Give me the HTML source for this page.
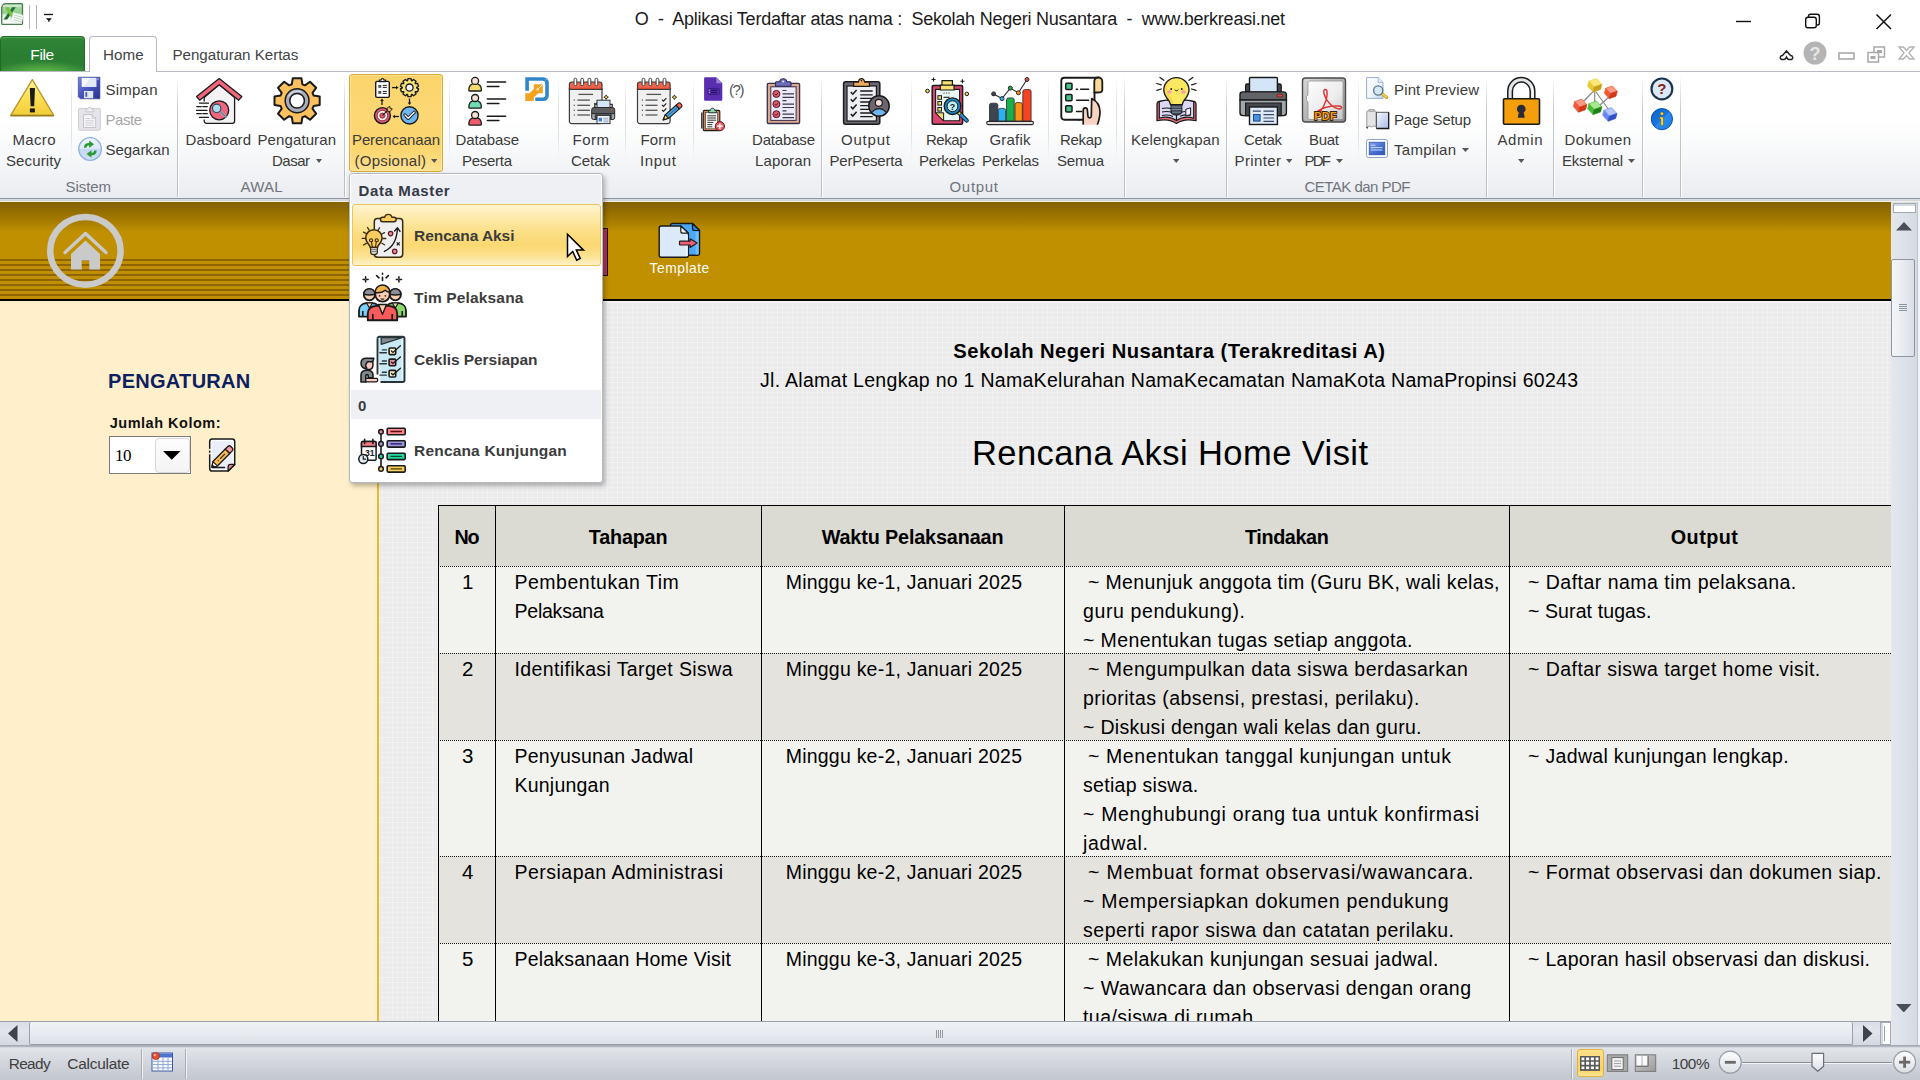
<!DOCTYPE html>
<html><head><meta charset="utf-8"><title>Excel</title>
<style>
html,body{margin:0;padding:0;}
body{width:1920px;height:1080px;overflow:hidden;position:relative;background:#fff;font-family:'Liberation Sans', sans-serif;}
#root{position:absolute;left:0;top:0;width:1920px;height:1080px;overflow:hidden;}
#root div,#root svg,#root span.t{position:absolute;}
span.t{white-space:pre;line-height:1;}
</style></head><body><div id="root">
<div style="left:0px;top:0px;width:1920px;height:71px;background:#fff"></div>
<span class="t" style="left:634.70px;top:9px;font-size:18px;font-weight:400;color:#1a1a1a;font-family:'Liberation Sans', sans-serif;letter-spacing:-0.237px;line-height:20px;">O  -  Aplikasi Terdaftar atas nama :  Sekolah Negeri Nusantara  -  www.berkreasi.net</span>
<svg style="left:1730px;top:8px;" width="170" height="28" viewBox="0 0 170 28">
<path d="M6 13.5h15" stroke="#111" stroke-width="1.4" fill="none"/>
<rect x="75.7" y="9.2" width="10.6" height="10.6" rx="2.2" fill="#fff" stroke="#111" stroke-width="1.4"/>
<path d="M78.5 9V8.2a2 2 0 0 1 2-2H87a2.4 2.4 0 0 1 2.4 2.4V15a2 2 0 0 1-2 2h-1" fill="none" stroke="#111" stroke-width="1.4"/>
<path d="M146.5 6.5l14.5 14.5M161 6.5l-14.5 14.5" stroke="#111" stroke-width="1.5" fill="none"/>
</svg>
<svg style="left:1776px;top:37.5px;" width="144" height="30" viewBox="0 0 144 30">
<path d="M5.5 21.5c-2-1-1.5-4 1-4l4-4.5 4 4.5c2.500 0 3 3 1 4h-2.500c-1.500 0-2-1.500-2.500-2.500-.5 1-1 2.500-2.500 2.500z" fill="#fff" stroke="#222" stroke-width="1.5"/>
<circle cx="39" cy="15" r="11.5" fill="#b4b4b4"/>
<text x="39" y="21.5" font-family="Liberation Sans, sans-serif" font-weight="700" font-size="18" text-anchor="middle" fill="#e6e6e6">?</text>
<rect x="63" y="15" width="15" height="6" fill="#fff" stroke="#a8a8a8" stroke-width="1.6"/>
<rect x="98" y="9" width="10.5" height="10" fill="#fff" stroke="#a8a8a8" stroke-width="1.5"/><rect x="101" y="12" width="5" height="3" fill="#a8a8a8"/>
<rect x="92" y="14.5" width="10.5" height="9.500" fill="#fff" stroke="#a8a8a8" stroke-width="1.5"/><rect x="94.5" y="18" width="5" height="3" fill="#a8a8a8"/>
<path d="M123 9h4.500l3 3.500 3-3.500h4.500l-5 6 5 6h-4.500l-3-3.500-3 3.500H123l5-6z" fill="#fff" stroke="#b4b4b4" stroke-width="1.4"/>
</svg>
<svg style="left:0px;top:0px;" width="60" height="36" viewBox="0 0 60 36">
<defs><linearGradient id="xg" x1="0" y1="0" x2="0" y2="1"><stop offset="0" stop-color="#b6dcb0"/><stop offset=".45" stop-color="#8fcf8c"/><stop offset=".55" stop-color="#e4f3e0"/><stop offset="1" stop-color="#ffffff"/></linearGradient></defs>
<path d="M1.700 8a4.400 4.400 0 0 1 4.400-4.400h15.400a1 1 0 0 1 1 1v18.800a1 1 0 0 1-1 1H2.700a1 1 0 0 1-1-1z" fill="url(#xg)" stroke="#4a7a52" stroke-width="1.300"/>
<path d="M3.200 5.200h18v1.200h-18z" fill="#eef8ec" opacity=".8"/>
<path d="M12.200 7.200h3.600L7.200 19.400H3.500z" fill="#1f6f3a"/>
<path d="M4.800 7.200h4l7.600 12.200h-4.200z" fill="#7cc048"/>
<path d="M13.400 12.600l10.400 2.800-2.600 8-10.600-2.600z" fill="#fbfdfb" stroke="#c8dcc8" stroke-width=".5"/>
<path d="M14.600 15.200l7.600 2M14 17.400l7.600 2M13.400 19.600l7.600 2" stroke="#a8cca8" stroke-width=".8"/>
<path d="M29.500 5v24M36.500 5v24" stroke="#b4b4b4" stroke-width="1"/>
<path d="M44 14.500h9" stroke="#111" stroke-width="1.300"/>
<path d="M45.800 18.200h6.200l-2.600 2.600v1.200h-1v-1.200z" fill="#111"/>
</svg>
<div style="left:0px;top:71px;width:1920px;height:1px;background:#b7bcc4"></div>
<div style="left:0px;top:36px;width:85px;height:35px;background:radial-gradient(ellipse 60% 38% at 50% 108%,rgba(110,200,80,.95),rgba(110,200,80,0) 100%),linear-gradient(180deg,#3a8f40 0%,#2f8436 8%,#2a7d31 55%,#2c8033 100%);border:1px solid #1f6a25;border-bottom:none;border-radius:4px 4px 0 0;box-sizing:border-box;box-shadow:inset 0 1px 0 #4fa554"></div>
<span class="t" style="left:30.30px;top:46px;font-size:15.5px;font-weight:400;color:#fff;font-family:'Liberation Sans', sans-serif;letter-spacing:-0.361px;line-height:17px;">File</span>
<div style="left:89px;top:36px;width:68px;height:37px;background:#fff;border:1px solid #b7bcc4;border-bottom:none;border-radius:4px 4px 0 0;box-sizing:border-box"></div>
<span class="t" style="left:103.00px;top:46px;font-size:15.2px;font-weight:400;color:#444;font-family:'Liberation Sans', sans-serif;letter-spacing:0.061px;line-height:17px;">Home</span>
<span class="t" style="left:172.50px;top:46px;font-size:15.2px;font-weight:400;color:#444;font-family:'Liberation Sans', sans-serif;letter-spacing:-0.054px;line-height:17px;">Pengaturan Kertas</span>
<div style="left:0px;top:72px;width:1920px;height:126px;background:linear-gradient(180deg,#ffffff 0%,#ffffff 38%,#f8f9fa 62%,#f1f2f5 82%,#eaecf0 100%)"></div>
<div style="left:0px;top:198px;width:1920px;height:1px;background:#8f939b"></div>
<div style="left:0px;top:199px;width:1920px;height:2px;background:linear-gradient(180deg,#d9dde4,#d0d4dc)"></div>
<div style="left:0px;top:201px;width:1920px;height:1px;background:#f3efe2"></div>
<div style="left:177.0px;top:75px;width:1px;height:122px;background:linear-gradient(180deg,rgba(190,195,203,0) 0%,#c5c9d0 30%,#b9bec7 100%)"></div>
<div style="left:178.0px;top:75px;width:1px;height:122px;background:linear-gradient(180deg,rgba(255,255,255,0) 0%,#fff 30%,#fff 100%)"></div>
<div style="left:343.5px;top:75px;width:1px;height:122px;background:linear-gradient(180deg,rgba(190,195,203,0) 0%,#c5c9d0 30%,#b9bec7 100%)"></div>
<div style="left:344.5px;top:75px;width:1px;height:122px;background:linear-gradient(180deg,rgba(255,255,255,0) 0%,#fff 30%,#fff 100%)"></div>
<div style="left:820.5px;top:75px;width:1px;height:122px;background:linear-gradient(180deg,rgba(190,195,203,0) 0%,#c5c9d0 30%,#b9bec7 100%)"></div>
<div style="left:821.5px;top:75px;width:1px;height:122px;background:linear-gradient(180deg,rgba(255,255,255,0) 0%,#fff 30%,#fff 100%)"></div>
<div style="left:1123.5px;top:75px;width:1px;height:122px;background:linear-gradient(180deg,rgba(190,195,203,0) 0%,#c5c9d0 30%,#b9bec7 100%)"></div>
<div style="left:1124.5px;top:75px;width:1px;height:122px;background:linear-gradient(180deg,rgba(255,255,255,0) 0%,#fff 30%,#fff 100%)"></div>
<div style="left:1225.5px;top:75px;width:1px;height:122px;background:linear-gradient(180deg,rgba(190,195,203,0) 0%,#c5c9d0 30%,#b9bec7 100%)"></div>
<div style="left:1226.5px;top:75px;width:1px;height:122px;background:linear-gradient(180deg,rgba(255,255,255,0) 0%,#fff 30%,#fff 100%)"></div>
<div style="left:1485.5px;top:75px;width:1px;height:122px;background:linear-gradient(180deg,rgba(190,195,203,0) 0%,#c5c9d0 30%,#b9bec7 100%)"></div>
<div style="left:1486.5px;top:75px;width:1px;height:122px;background:linear-gradient(180deg,rgba(255,255,255,0) 0%,#fff 30%,#fff 100%)"></div>
<div style="left:1552.5px;top:75px;width:1px;height:122px;background:linear-gradient(180deg,rgba(190,195,203,0) 0%,#c5c9d0 30%,#b9bec7 100%)"></div>
<div style="left:1553.5px;top:75px;width:1px;height:122px;background:linear-gradient(180deg,rgba(255,255,255,0) 0%,#fff 30%,#fff 100%)"></div>
<div style="left:1641.5px;top:75px;width:1px;height:122px;background:linear-gradient(180deg,rgba(190,195,203,0) 0%,#c5c9d0 30%,#b9bec7 100%)"></div>
<div style="left:1642.5px;top:75px;width:1px;height:122px;background:linear-gradient(180deg,rgba(255,255,255,0) 0%,#fff 30%,#fff 100%)"></div>
<div style="left:1680.0px;top:75px;width:1px;height:122px;background:linear-gradient(180deg,rgba(190,195,203,0) 0%,#c5c9d0 30%,#b9bec7 100%)"></div>
<div style="left:1681.0px;top:75px;width:1px;height:122px;background:linear-gradient(180deg,rgba(255,255,255,0) 0%,#fff 30%,#fff 100%)"></div>
<div style="left:71px;top:78px;width:1px;height:82px;background:linear-gradient(180deg,rgba(220,223,228,0),#dfe2e7 30%,#dfe2e7 70%,rgba(220,223,228,0))"></div>
<div style="left:449px;top:78px;width:1px;height:82px;background:linear-gradient(180deg,rgba(220,223,228,0),#dfe2e7 30%,#dfe2e7 70%,rgba(220,223,228,0))"></div>
<div style="left:557.5px;top:78px;width:1px;height:82px;background:linear-gradient(180deg,rgba(220,223,228,0),#dfe2e7 30%,#dfe2e7 70%,rgba(220,223,228,0))"></div>
<div style="left:625px;top:78px;width:1px;height:82px;background:linear-gradient(180deg,rgba(220,223,228,0),#dfe2e7 30%,#dfe2e7 70%,rgba(220,223,228,0))"></div>
<div style="left:693px;top:78px;width:1px;height:82px;background:linear-gradient(180deg,rgba(220,223,228,0),#dfe2e7 30%,#dfe2e7 70%,rgba(220,223,228,0))"></div>
<div style="left:911px;top:78px;width:1px;height:82px;background:linear-gradient(180deg,rgba(220,223,228,0),#dfe2e7 30%,#dfe2e7 70%,rgba(220,223,228,0))"></div>
<div style="left:1047.5px;top:78px;width:1px;height:82px;background:linear-gradient(180deg,rgba(220,223,228,0),#dfe2e7 30%,#dfe2e7 70%,rgba(220,223,228,0))"></div>
<div style="left:1115.5px;top:78px;width:1px;height:82px;background:linear-gradient(180deg,rgba(220,223,228,0),#dfe2e7 30%,#dfe2e7 70%,rgba(220,223,228,0))"></div>
<div style="left:1357.5px;top:78px;width:1px;height:82px;background:linear-gradient(180deg,rgba(220,223,228,0),#dfe2e7 30%,#dfe2e7 70%,rgba(220,223,228,0))"></div>
<span class="t" style="left:12.50px;top:131px;font-size:15px;font-weight:400;color:#3b3b3b;font-family:'Liberation Sans', sans-serif;letter-spacing:0.328px;line-height:17px;">Macro</span>
<span class="t" style="left:6.00px;top:152px;font-size:15px;font-weight:400;color:#3b3b3b;font-family:'Liberation Sans', sans-serif;letter-spacing:0.116px;line-height:17px;">Security</span>
<span class="t" style="left:105.50px;top:81px;font-size:15px;font-weight:400;color:#3b3b3b;font-family:'Liberation Sans', sans-serif;letter-spacing:0.228px;line-height:17px;">Simpan</span>
<span class="t" style="left:105.50px;top:111px;font-size:15px;font-weight:400;color:#a8a8a8;font-family:'Liberation Sans', sans-serif;letter-spacing:-0.465px;line-height:17px;">Paste</span>
<span class="t" style="left:105.50px;top:141px;font-size:15px;font-weight:400;color:#3b3b3b;font-family:'Liberation Sans', sans-serif;letter-spacing:-0.031px;line-height:17px;">Segarkan</span>
<span class="t" style="left:65.50px;top:178px;font-size:15px;font-weight:400;color:#70757d;font-family:'Liberation Sans', sans-serif;letter-spacing:-0.069px;line-height:17px;">Sistem</span>
<span class="t" style="left:185.50px;top:131px;font-size:15px;font-weight:400;color:#3b3b3b;font-family:'Liberation Sans', sans-serif;letter-spacing:0.065px;line-height:17px;">Dasboard</span>
<span class="t" style="left:257.50px;top:131px;font-size:15px;font-weight:400;color:#3b3b3b;font-family:'Liberation Sans', sans-serif;letter-spacing:0.102px;line-height:17px;">Pengaturan</span>
<span class="t" style="left:272.00px;top:152px;font-size:15px;font-weight:400;color:#3b3b3b;font-family:'Liberation Sans', sans-serif;letter-spacing:-0.504px;line-height:17px;">Dasar</span>
<svg style="left:315.5px;top:158.5px;" width="6.0" height="4" viewBox="0 0 6.0 4"><path d="M0 0h6.0l-3.0 4z" fill="#555"/></svg>
<span class="t" style="left:240.50px;top:178px;font-size:15px;font-weight:400;color:#70757d;font-family:'Liberation Sans', sans-serif;letter-spacing:0.198px;line-height:17px;">AWAL</span>
<div style="left:349px;top:74px;width:93.5px;height:98px;box-sizing:border-box;border:1px solid #d9a93a;border-radius:3px;background:linear-gradient(180deg,#fbd46a 0%,#fcd774 40%,#fbd56c 75%,#fde08e 100%);box-shadow:inset 0 0 0 1px rgba(255,236,170,.55)"></div>
<span class="t" style="left:352.00px;top:131px;font-size:15px;font-weight:400;color:#3b3b3b;font-family:'Liberation Sans', sans-serif;letter-spacing:-0.125px;line-height:17px;">Perencanaan</span>
<span class="t" style="left:354.50px;top:152px;font-size:15px;font-weight:400;color:#3b3b3b;font-family:'Liberation Sans', sans-serif;letter-spacing:0.255px;line-height:17px;">(Opsional)</span>
<svg style="left:430.5px;top:158.5px;" width="6.5" height="4" viewBox="0 0 6.5 4"><path d="M0 0h6.5l-3.25 4z" fill="#555"/></svg>
<span class="t" style="left:455.50px;top:131px;font-size:15px;font-weight:400;color:#3b3b3b;font-family:'Liberation Sans', sans-serif;letter-spacing:-0.103px;line-height:17px;">Database</span>
<span class="t" style="left:462.00px;top:152px;font-size:15px;font-weight:400;color:#3b3b3b;font-family:'Liberation Sans', sans-serif;letter-spacing:-0.284px;line-height:17px;">Peserta</span>
<span class="t" style="left:572.50px;top:131px;font-size:15px;font-weight:400;color:#3b3b3b;font-family:'Liberation Sans', sans-serif;letter-spacing:0.500px;line-height:17px;">Form</span>
<span class="t" style="left:571.00px;top:152px;font-size:15px;font-weight:400;color:#3b3b3b;font-family:'Liberation Sans', sans-serif;letter-spacing:-0.047px;line-height:17px;">Cetak</span>
<span class="t" style="left:640.50px;top:131px;font-size:15px;font-weight:400;color:#3b3b3b;font-family:'Liberation Sans', sans-serif;letter-spacing:0.167px;line-height:17px;">Form</span>
<span class="t" style="left:640.00px;top:152px;font-size:15px;font-weight:400;color:#3b3b3b;font-family:'Liberation Sans', sans-serif;letter-spacing:0.656px;line-height:17px;">Input</span>
<span class="t" style="left:729.00px;top:81px;font-size:15px;font-weight:400;color:#555;font-family:'Liberation Sans', sans-serif;letter-spacing:-1.422px;line-height:17px;">(?)</span>
<span class="t" style="left:752.00px;top:131px;font-size:15px;font-weight:400;color:#3b3b3b;font-family:'Liberation Sans', sans-serif;letter-spacing:-0.174px;line-height:17px;">Database</span>
<span class="t" style="left:755.00px;top:152px;font-size:15px;font-weight:400;color:#3b3b3b;font-family:'Liberation Sans', sans-serif;letter-spacing:0.156px;line-height:17px;">Laporan</span>
<span class="t" style="left:841.00px;top:131px;font-size:15px;font-weight:400;color:#3b3b3b;font-family:'Liberation Sans', sans-serif;letter-spacing:0.794px;line-height:17px;">Output</span>
<span class="t" style="left:829.50px;top:152px;font-size:15px;font-weight:400;color:#3b3b3b;font-family:'Liberation Sans', sans-serif;letter-spacing:-0.227px;line-height:17px;">PerPeserta</span>
<span class="t" style="left:926.00px;top:131px;font-size:15px;font-weight:400;color:#3b3b3b;font-family:'Liberation Sans', sans-serif;letter-spacing:-0.465px;line-height:17px;">Rekap</span>
<span class="t" style="left:919.00px;top:152px;font-size:15px;font-weight:400;color:#3b3b3b;font-family:'Liberation Sans', sans-serif;letter-spacing:-0.337px;line-height:17px;">Perkelas</span>
<span class="t" style="left:989.50px;top:131px;font-size:15px;font-weight:400;color:#3b3b3b;font-family:'Liberation Sans', sans-serif;letter-spacing:0.197px;line-height:17px;">Grafik</span>
<span class="t" style="left:982.00px;top:152px;font-size:15px;font-weight:400;color:#3b3b3b;font-family:'Liberation Sans', sans-serif;letter-spacing:-0.194px;line-height:17px;">Perkelas</span>
<span class="t" style="left:1060.00px;top:131px;font-size:15px;font-weight:400;color:#3b3b3b;font-family:'Liberation Sans', sans-serif;letter-spacing:-0.340px;line-height:17px;">Rekap</span>
<span class="t" style="left:1057.00px;top:152px;font-size:15px;font-weight:400;color:#3b3b3b;font-family:'Liberation Sans', sans-serif;letter-spacing:-0.133px;line-height:17px;">Semua</span>
<span class="t" style="left:949.50px;top:178px;font-size:15px;font-weight:400;color:#70757d;font-family:'Liberation Sans', sans-serif;letter-spacing:0.694px;line-height:17px;">Output</span>
<span class="t" style="left:1131.00px;top:131px;font-size:15px;font-weight:400;color:#3b3b3b;font-family:'Liberation Sans', sans-serif;letter-spacing:0.092px;line-height:17px;">Kelengkapan</span>
<svg style="left:1172.5px;top:158.5px;" width="6.5" height="4" viewBox="0 0 6.5 4"><path d="M0 0h6.5l-3.25 4z" fill="#555"/></svg>
<span class="t" style="left:1244.00px;top:131px;font-size:15px;font-weight:400;color:#3b3b3b;font-family:'Liberation Sans', sans-serif;letter-spacing:-0.297px;line-height:17px;">Cetak</span>
<span class="t" style="left:1234.50px;top:152px;font-size:15px;font-weight:400;color:#3b3b3b;font-family:'Liberation Sans', sans-serif;letter-spacing:0.385px;line-height:17px;">Printer</span>
<svg style="left:1285.5px;top:158.5px;" width="6.5" height="4" viewBox="0 0 6.5 4"><path d="M0 0h6.5l-3.25 4z" fill="#555"/></svg>
<span class="t" style="left:1309.00px;top:131px;font-size:15px;font-weight:400;color:#3b3b3b;font-family:'Liberation Sans', sans-serif;letter-spacing:-0.286px;line-height:17px;">Buat</span>
<span class="t" style="left:1304.50px;top:152px;font-size:15px;font-weight:400;color:#3b3b3b;font-family:'Liberation Sans', sans-serif;letter-spacing:-1.750px;line-height:17px;">PDF</span>
<svg style="left:1336px;top:158.5px;" width="7" height="4" viewBox="0 0 7 4"><path d="M0 0h7l-3.5 4z" fill="#555"/></svg>
<span class="t" style="left:1394.00px;top:81px;font-size:15px;font-weight:400;color:#3b3b3b;font-family:'Liberation Sans', sans-serif;letter-spacing:0.148px;line-height:17px;">Pint Preview</span>
<span class="t" style="left:1394.00px;top:111px;font-size:15px;font-weight:400;color:#3b3b3b;font-family:'Liberation Sans', sans-serif;letter-spacing:-0.156px;line-height:17px;">Page Setup</span>
<span class="t" style="left:1394.00px;top:141px;font-size:15px;font-weight:400;color:#3b3b3b;font-family:'Liberation Sans', sans-serif;letter-spacing:0.281px;line-height:17px;">Tampilan</span>
<svg style="left:1462px;top:147.5px;" width="7" height="4" viewBox="0 0 7 4"><path d="M0 0h7l-3.5 4z" fill="#555"/></svg>
<span class="t" style="left:1304.50px;top:178px;font-size:15px;font-weight:400;color:#70757d;font-family:'Liberation Sans', sans-serif;letter-spacing:-0.522px;line-height:17px;">CETAK dan PDF</span>
<span class="t" style="left:1497.50px;top:131px;font-size:15px;font-weight:400;color:#3b3b3b;font-family:'Liberation Sans', sans-serif;letter-spacing:0.617px;line-height:17px;">Admin</span>
<svg style="left:1517.5px;top:158.5px;" width="6.5" height="4" viewBox="0 0 6.5 4"><path d="M0 0h6.5l-3.25 4z" fill="#555"/></svg>
<span class="t" style="left:1564.50px;top:131px;font-size:15px;font-weight:400;color:#3b3b3b;font-family:'Liberation Sans', sans-serif;letter-spacing:0.383px;line-height:17px;">Dokumen</span>
<span class="t" style="left:1562.00px;top:152px;font-size:15px;font-weight:400;color:#3b3b3b;font-family:'Liberation Sans', sans-serif;letter-spacing:-0.191px;line-height:17px;">Eksternal</span>
<svg style="left:1628px;top:158.5px;" width="7" height="4" viewBox="0 0 7 4"><path d="M0 0h7l-3.5 4z" fill="#555"/></svg>
<div style="left:0px;top:202px;width:1891px;height:97px;background:linear-gradient(180deg,#856300 0px,#8d6900 6px,#a87e00 20px,#c09000 30px,#c09000 100%)"></div>
<div style="left:0px;top:259px;width:378px;height:40px;background:repeating-linear-gradient(180deg,#8e6500 0px,#8e6500 1.500px,#c09000 2px,#c09000 4.500px,#8e6500 5px)"></div>
<div style="left:0px;top:299px;width:1891px;height:2px;background:#000"></div>
<svg style="left:45px;top:211px;" width="82" height="82" viewBox="0 0 82 82">
<ellipse cx="40.400" cy="39.800" rx="35.200" ry="33.900" fill="none" stroke="#cacaca" stroke-width="6.500"/>
<path d="M40.500 22.500L20 41.500" stroke="#cacaca" stroke-width="3.400" stroke-linecap="round" fill="none"/>
<path d="M40.500 22.500L61 41.500" stroke="#cacaca" stroke-width="3.400" stroke-linecap="round" fill="none"/>
<path d="M40.500 29.500L26 43v15.500h10.700V49.500h7.600v9H55V43z" fill="#cacaca"/>
</svg>
<span class="t" style="left:649.50px;top:261px;font-size:13.8px;font-weight:400;color:#fff;font-family:'Liberation Sans', sans-serif;letter-spacing:0.545px;line-height:15px;">Template</span>
<div style="left:602px;top:228px;width:6px;height:47.5px;background:#ad3550;border:1px solid #1b0b10;border-left:none;box-sizing:border-box"></div>
<div style="left:0px;top:301px;width:377px;height:720px;background:#fff0cb"></div>
<div style="left:375.5px;top:301px;width:1.5px;height:720px;background:linear-gradient(90deg,#fff0cb,#fdf0a4)"></div>
<div style="left:376.6px;top:301px;width:2.4px;height:720px;background:#e1ba48"></div>
<div style="left:379px;top:301px;width:1px;height:720px;background:#fbf1c6"></div>
<span class="t" style="left:108.00px;top:370px;font-size:20px;font-weight:700;color:#0b2060;font-family:'Liberation Sans', sans-serif;letter-spacing:0.295px;line-height:22px;">PENGATURAN</span>
<span class="t" style="left:109.70px;top:415px;font-size:14.5px;font-weight:700;color:#111;font-family:'Liberation Sans', sans-serif;letter-spacing:0.514px;line-height:16px;">Jumlah Kolom:</span>
<div style="left:109px;top:436px;width:82px;height:38px;background:#fff;border:1px solid #7b7b7b;box-sizing:border-box"></div>
<div style="left:154.5px;top:437.5px;width:35px;height:35px;background:linear-gradient(180deg,#fdfdfd,#f4f4f4);border:1px solid #d8d8d8;border-radius:4px;box-sizing:border-box"></div>
<svg style="left:162.5px;top:451px;" width="18" height="9" viewBox="0 0 18 9"><path d="M0 0h17.500l-8.750 8.800z" fill="#000"/></svg>
<span class="t" style="left:115.00px;top:446px;font-size:17px;font-weight:400;color:#000;font-family:'Liberation Serif', serif;letter-spacing:-0.400px;line-height:19px;">10</span>
<div style="left:380px;top:301px;width:1511px;height:720px;background-color:#ebebeb;background-image:linear-gradient(0deg,rgba(255,255,255,.24) 1px,transparent 1px),linear-gradient(90deg,rgba(255,255,255,.24) 1px,transparent 1px);background-size:5px 5px;background-position:2px 2px"></div>
<div style="left:380px;top:301px;width:1511px;height:1px;background:#f8f8f8"></div>
<span class="t" style="left:953.30px;top:340px;font-size:20.2px;font-weight:700;color:#000;font-family:'Liberation Sans', sans-serif;letter-spacing:0.459px;line-height:22px;">Sekolah Negeri Nusantara (Terakreditasi A)</span>
<span class="t" style="left:760.00px;top:369px;font-size:19.5px;font-weight:400;color:#000;font-family:'Liberation Sans', sans-serif;letter-spacing:0.287px;line-height:22px;">Jl. Alamat Lengkap no 1 NamaKelurahan NamaKecamatan NamaKota NamaPropinsi 60243</span>
<span class="t" style="left:972.00px;top:434px;font-size:34.5px;font-weight:400;color:#000;font-family:'Liberation Sans', sans-serif;letter-spacing:0.422px;line-height:38px;">Rencana Aksi Home Visit</span>
<div style="left:438px;top:505px;width:1453px;height:61px;background:#dbdbd3"></div>
<div style="left:438px;top:566px;width:1453px;height:87px;background:#f2f2ee"></div>
<div style="left:438px;top:653px;width:1453px;height:87px;background:#e5e3de"></div>
<div style="left:438px;top:740px;width:1453px;height:116px;background:#f2f2ee"></div>
<div style="left:438px;top:856px;width:1453px;height:87px;background:#e5e3de"></div>
<div style="left:438px;top:943px;width:1453px;height:78px;background:#f2f2ee"></div>
<div style="left:438px;top:505px;width:1453px;height:1px;background:#000"></div>
<div style="left:438px;top:566px;width:1453px;height:1px;background:repeating-linear-gradient(90deg,#1a1a1a 0,#1a1a1a 1px,transparent 1px,transparent 2px)"></div>
<div style="left:438px;top:653px;width:1453px;height:1px;background:repeating-linear-gradient(90deg,#1a1a1a 0,#1a1a1a 1px,transparent 1px,transparent 2px)"></div>
<div style="left:438px;top:740px;width:1453px;height:1px;background:repeating-linear-gradient(90deg,#1a1a1a 0,#1a1a1a 1px,transparent 1px,transparent 2px)"></div>
<div style="left:438px;top:856px;width:1453px;height:1px;background:repeating-linear-gradient(90deg,#1a1a1a 0,#1a1a1a 1px,transparent 1px,transparent 2px)"></div>
<div style="left:438px;top:943px;width:1453px;height:1px;background:repeating-linear-gradient(90deg,#1a1a1a 0,#1a1a1a 1px,transparent 1px,transparent 2px)"></div>
<div style="left:438px;top:505px;width:1px;height:516px;background:#000"></div>
<div style="left:495px;top:505px;width:1px;height:516px;background:#000"></div>
<div style="left:761px;top:505px;width:1px;height:516px;background:#000"></div>
<div style="left:1064px;top:505px;width:1px;height:516px;background:#000"></div>
<div style="left:1509px;top:505px;width:1px;height:516px;background:#000"></div>
<span class="t" style="left:454.50px;top:526px;font-size:19.8px;font-weight:700;color:#000;font-family:'Liberation Sans', sans-serif;letter-spacing:-1.375px;line-height:22px;">No</span>
<span class="t" style="left:588.75px;top:526px;font-size:19.8px;font-weight:700;color:#000;font-family:'Liberation Sans', sans-serif;letter-spacing:-0.188px;line-height:22px;">Tahapan</span>
<span class="t" style="left:821.70px;top:526px;font-size:19.8px;font-weight:700;color:#000;font-family:'Liberation Sans', sans-serif;letter-spacing:-0.137px;line-height:22px;">Waktu Pelaksanaan</span>
<span class="t" style="left:1245.00px;top:526px;font-size:19.8px;font-weight:700;color:#000;font-family:'Liberation Sans', sans-serif;letter-spacing:-0.391px;line-height:22px;">Tindakan</span>
<span class="t" style="left:1670.80px;top:526px;font-size:19.8px;font-weight:700;color:#000;font-family:'Liberation Sans', sans-serif;letter-spacing:0.438px;line-height:22px;">Output</span>
<div style="left:380px;top:301px;width:1511px;height:720px;overflow:hidden"><div style="left:-380px;top:-301px;width:1920px;height:1080px">
<span class="t" style="left:462.00px;top:570px;font-size:20.5px;font-weight:400;color:#000;font-family:'Liberation Sans', sans-serif;letter-spacing:-1.906px;line-height:23px;">1</span>
<span class="t" style="left:514.50px;top:571px;font-size:19.5px;font-weight:400;color:#000;font-family:'Liberation Sans', sans-serif;letter-spacing:0.506px;line-height:22px;">Pembentukan Tim</span>
<span class="t" style="left:514.50px;top:600px;font-size:19.5px;font-weight:400;color:#000;font-family:'Liberation Sans', sans-serif;letter-spacing:-0.229px;line-height:22px;">Pelaksana</span>
<span class="t" style="left:785.70px;top:571px;font-size:19.5px;font-weight:400;color:#000;font-family:'Liberation Sans', sans-serif;letter-spacing:0.225px;line-height:22px;">Minggu ke-1, Januari 2025</span>
<span class="t" style="left:1088.00px;top:571px;font-size:19.5px;font-weight:400;color:#000;font-family:'Liberation Sans', sans-serif;letter-spacing:0.357px;line-height:22px;">~ Menunjuk anggota tim (Guru BK, wali kelas,</span>
<span class="t" style="left:1083.00px;top:600px;font-size:19.5px;font-weight:400;color:#000;font-family:'Liberation Sans', sans-serif;letter-spacing:0.608px;line-height:22px;">guru pendukung).</span>
<span class="t" style="left:1083.00px;top:629px;font-size:19.5px;font-weight:400;color:#000;font-family:'Liberation Sans', sans-serif;letter-spacing:0.408px;line-height:22px;">~ Menentukan tugas setiap anggota.</span>
<span class="t" style="left:1528.00px;top:571px;font-size:19.5px;font-weight:400;color:#000;font-family:'Liberation Sans', sans-serif;letter-spacing:0.483px;line-height:22px;">~ Daftar nama tim pelaksana.</span>
<span class="t" style="left:1528.00px;top:600px;font-size:19.5px;font-weight:400;color:#000;font-family:'Liberation Sans', sans-serif;letter-spacing:0.104px;line-height:22px;">~ Surat tugas.</span>
<span class="t" style="left:462.00px;top:657px;font-size:20.5px;font-weight:400;color:#000;font-family:'Liberation Sans', sans-serif;letter-spacing:-1.906px;line-height:23px;">2</span>
<span class="t" style="left:514.50px;top:658px;font-size:19.5px;font-weight:400;color:#000;font-family:'Liberation Sans', sans-serif;letter-spacing:0.382px;line-height:22px;">Identifikasi Target Siswa</span>
<span class="t" style="left:785.70px;top:658px;font-size:19.5px;font-weight:400;color:#000;font-family:'Liberation Sans', sans-serif;letter-spacing:0.225px;line-height:22px;">Minggu ke-1, Januari 2025</span>
<span class="t" style="left:1088.00px;top:658px;font-size:19.5px;font-weight:400;color:#000;font-family:'Liberation Sans', sans-serif;letter-spacing:0.508px;line-height:22px;">~ Mengumpulkan data siswa berdasarkan</span>
<span class="t" style="left:1083.00px;top:687px;font-size:19.5px;font-weight:400;color:#000;font-family:'Liberation Sans', sans-serif;letter-spacing:0.453px;line-height:22px;">prioritas (absensi, prestasi, perilaku).</span>
<span class="t" style="left:1083.00px;top:716px;font-size:19.5px;font-weight:400;color:#000;font-family:'Liberation Sans', sans-serif;letter-spacing:0.294px;line-height:22px;">~ Diskusi dengan wali kelas dan guru.</span>
<span class="t" style="left:1528.00px;top:658px;font-size:19.5px;font-weight:400;color:#000;font-family:'Liberation Sans', sans-serif;letter-spacing:0.447px;line-height:22px;">~ Daftar siswa target home visit.</span>
<span class="t" style="left:462.00px;top:744px;font-size:20.5px;font-weight:400;color:#000;font-family:'Liberation Sans', sans-serif;letter-spacing:-1.906px;line-height:23px;">3</span>
<span class="t" style="left:514.50px;top:745px;font-size:19.5px;font-weight:400;color:#000;font-family:'Liberation Sans', sans-serif;letter-spacing:0.247px;line-height:22px;">Penyusunan Jadwal</span>
<span class="t" style="left:514.50px;top:774px;font-size:19.5px;font-weight:400;color:#000;font-family:'Liberation Sans', sans-serif;letter-spacing:0.217px;line-height:22px;">Kunjungan</span>
<span class="t" style="left:785.70px;top:745px;font-size:19.5px;font-weight:400;color:#000;font-family:'Liberation Sans', sans-serif;letter-spacing:0.225px;line-height:22px;">Minggu ke-2, Januari 2025</span>
<span class="t" style="left:1088.00px;top:745px;font-size:19.5px;font-weight:400;color:#000;font-family:'Liberation Sans', sans-serif;letter-spacing:0.598px;line-height:22px;">~ Menentukan tanggal kunjungan untuk</span>
<span class="t" style="left:1083.00px;top:774px;font-size:19.5px;font-weight:400;color:#000;font-family:'Liberation Sans', sans-serif;letter-spacing:0.297px;line-height:22px;">setiap siswa.</span>
<span class="t" style="left:1083.00px;top:803px;font-size:19.5px;font-weight:400;color:#000;font-family:'Liberation Sans', sans-serif;letter-spacing:0.661px;line-height:22px;">~ Menghubungi orang tua untuk konfirmasi</span>
<span class="t" style="left:1083.00px;top:832px;font-size:19.5px;font-weight:400;color:#000;font-family:'Liberation Sans', sans-serif;letter-spacing:0.716px;line-height:22px;">jadwal.</span>
<span class="t" style="left:1528.00px;top:745px;font-size:19.5px;font-weight:400;color:#000;font-family:'Liberation Sans', sans-serif;letter-spacing:0.328px;line-height:22px;">~ Jadwal kunjungan lengkap.</span>
<span class="t" style="left:462.00px;top:860px;font-size:20.5px;font-weight:400;color:#000;font-family:'Liberation Sans', sans-serif;letter-spacing:-1.906px;line-height:23px;">4</span>
<span class="t" style="left:514.50px;top:861px;font-size:19.5px;font-weight:400;color:#000;font-family:'Liberation Sans', sans-serif;letter-spacing:0.484px;line-height:22px;">Persiapan Administrasi</span>
<span class="t" style="left:785.70px;top:861px;font-size:19.5px;font-weight:400;color:#000;font-family:'Liberation Sans', sans-serif;letter-spacing:0.225px;line-height:22px;">Minggu ke-2, Januari 2025</span>
<span class="t" style="left:1088.00px;top:861px;font-size:19.5px;font-weight:400;color:#000;font-family:'Liberation Sans', sans-serif;letter-spacing:0.788px;line-height:22px;">~ Membuat format observasi/wawancara.</span>
<span class="t" style="left:1083.00px;top:890px;font-size:19.5px;font-weight:400;color:#000;font-family:'Liberation Sans', sans-serif;letter-spacing:0.700px;line-height:22px;">~ Mempersiapkan dokumen pendukung</span>
<span class="t" style="left:1083.00px;top:919px;font-size:19.5px;font-weight:400;color:#000;font-family:'Liberation Sans', sans-serif;letter-spacing:0.522px;line-height:22px;">seperti rapor siswa dan catatan perilaku.</span>
<span class="t" style="left:1528.00px;top:861px;font-size:19.5px;font-weight:400;color:#000;font-family:'Liberation Sans', sans-serif;letter-spacing:0.453px;line-height:22px;">~ Format observasi dan dokumen siap.</span>
<span class="t" style="left:462.00px;top:947px;font-size:20.5px;font-weight:400;color:#000;font-family:'Liberation Sans', sans-serif;letter-spacing:-1.906px;line-height:23px;">5</span>
<span class="t" style="left:514.50px;top:948px;font-size:19.5px;font-weight:400;color:#000;font-family:'Liberation Sans', sans-serif;letter-spacing:0.210px;line-height:22px;">Pelaksanaan Home Visit</span>
<span class="t" style="left:785.70px;top:948px;font-size:19.5px;font-weight:400;color:#000;font-family:'Liberation Sans', sans-serif;letter-spacing:0.225px;line-height:22px;">Minggu ke-3, Januari 2025</span>
<span class="t" style="left:1088.00px;top:948px;font-size:19.5px;font-weight:400;color:#000;font-family:'Liberation Sans', sans-serif;letter-spacing:0.459px;line-height:22px;">~ Melakukan kunjungan sesuai jadwal.</span>
<span class="t" style="left:1083.00px;top:977px;font-size:19.5px;font-weight:400;color:#000;font-family:'Liberation Sans', sans-serif;letter-spacing:0.442px;line-height:22px;">~ Wawancara dan observasi dengan orang</span>
<span class="t" style="left:1083.00px;top:1006px;font-size:19.5px;font-weight:400;color:#000;font-family:'Liberation Sans', sans-serif;letter-spacing:0.444px;line-height:22px;">tua/siswa di rumah.</span>
<span class="t" style="left:1528.00px;top:948px;font-size:19.5px;font-weight:400;color:#000;font-family:'Liberation Sans', sans-serif;letter-spacing:0.293px;line-height:22px;">~ Laporan hasil observasi dan diskusi.</span>
</div></div>
<div style="left:1891px;top:202px;width:26px;height:843px;background:linear-gradient(90deg,#e4e7ed 0%,#dde1e9 50%,#d5d9e2 100%)"></div>
<div style="left:1917px;top:202px;width:3px;height:843px;background:#f1f3f6"></div>
<div style="left:1916.5px;top:202px;width:1px;height:843px;background:#bfc4cd"></div>
<div style="left:1892.5px;top:202.5px;width:23px;height:10px;background:#fff;border:1px solid #a4aab5;box-sizing:border-box;box-shadow:inset 0 2px 0 #d5d9e0"></div>
<svg style="left:1895.5px;top:222px;" width="16" height="8.5" viewBox="0 0 16 8.5"><path d="M0 8.500L8 0l8 8.500z" fill="#4a4e57"/></svg>
<div style="left:1891.3px;top:259px;width:23.5px;height:97.5px;background:linear-gradient(90deg,#f3f5f8 0%,#e9ecf1 50%,#d9dde5 100%);border:1px solid #9097a4;border-radius:2px;box-sizing:border-box"></div>
<div style="left:1899px;top:304px;width:8px;height:1px;background:#8b919d"></div>
<div style="left:1899px;top:306px;width:8px;height:1px;background:#8b919d"></div>
<div style="left:1899px;top:308px;width:8px;height:1px;background:#8b919d"></div>
<div style="left:1899px;top:310px;width:8px;height:1px;background:#8b919d"></div>
<svg style="left:1896px;top:1003.5px;" width="15.5" height="8.5" viewBox="0 0 15.5 8.5"><path d="M0 0h15.500L7.750 8.500z" fill="#4a4e57"/></svg>
<div style="left:0px;top:1021px;width:1891px;height:25px;background:linear-gradient(180deg,#d9dde5,#e2e5eb 40%,#d3d7df 100%)"></div>
<div style="left:0px;top:1021px;width:1891px;height:1px;background:#9aa0ab"></div>
<div style="left:28.5px;top:1022px;width:1824px;height:23px;background:linear-gradient(180deg,#f0f2f6 0%,#e8ebf0 50%,#dde0e7 100%);border:1px solid #9aa0ab;border-top:none;border-radius:2px;box-sizing:border-box"></div>
<svg style="left:8px;top:1025px;" width="9.5" height="17" viewBox="0 0 9.5 17"><path d="M9.500 0v17L0 8.500z" fill="#3e424a"/></svg>
<svg style="left:1863px;top:1025px;" width="9.5" height="17" viewBox="0 0 9.5 17"><path d="M0 0v17l9.500-8.500z" fill="#3e424a"/></svg>
<div style="left:936px;top:1030px;width:1px;height:8px;background:#9298a4"></div>
<div style="left:938px;top:1030px;width:1px;height:8px;background:#9298a4"></div>
<div style="left:940px;top:1030px;width:1px;height:8px;background:#9298a4"></div>
<div style="left:942px;top:1030px;width:1px;height:8px;background:#9298a4"></div>
<div style="left:1880px;top:1022px;width:11px;height:23px;background:#fff;border:1px solid #a4aab5;box-sizing:border-box;box-shadow:inset 2px 0 0 #d5d9e0"></div>
<div style="left:1883.5px;top:1026px;width:1px;height:15px;background:#9aa0ab"></div>
<div style="left:0px;top:1045px;width:1920px;height:3px;background:linear-gradient(180deg,#9da3ad,#b8bcc5 60%,#e8eaee)"></div>
<div style="left:0px;top:1048px;width:1920px;height:32px;background:linear-gradient(180deg,#e1e4e8 0%,#d3d6dc 45%,#c3c7ce 100%)"></div>
<span class="t" style="left:8.75px;top:1055px;font-size:15.4px;font-weight:400;color:#3f3f3f;font-family:'Liberation Sans', sans-serif;letter-spacing:-0.662px;line-height:17px;">Ready</span>
<span class="t" style="left:67.30px;top:1055px;font-size:15.4px;font-weight:400;color:#3f3f3f;font-family:'Liberation Sans', sans-serif;letter-spacing:-0.234px;line-height:17px;">Calculate</span>
<div style="left:140.5px;top:1049px;width:1px;height:30px;background:#a9aeb7"></div>
<div style="left:141.5px;top:1049px;width:1px;height:30px;background:#eef0f3"></div>
<div style="left:184.5px;top:1049px;width:1px;height:30px;background:#a9aeb7"></div>
<div style="left:185.5px;top:1049px;width:1px;height:30px;background:#eef0f3"></div>
<div style="left:1571px;top:1049px;width:1px;height:30px;background:#a9aeb7"></div>
<div style="left:1572px;top:1049px;width:1px;height:30px;background:#eef0f3"></div>
<span class="t" style="left:1671.70px;top:1055px;font-size:15.4px;font-weight:400;color:#3f3f3f;font-family:'Liberation Sans', sans-serif;letter-spacing:-0.492px;line-height:17px;">100%</span>
<svg style="left:7px;top:76px" width="50" height="44" viewBox="7 76 50 44">
<defs><linearGradient id="wg" x1="0" y1="0" x2="0" y2="1"><stop offset="0" stop-color="#fdf0a0"/><stop offset=".45" stop-color="#fde258"/><stop offset="1" stop-color="#f3cc38"/></linearGradient></defs>
<path d="M32.300 79.600L53.600 115.200H10.800z" fill="url(#wg)" stroke="#b8962c" stroke-width="1.300" stroke-linejoin="round"/>
<path d="M10.600 115.700h43.200" stroke="#9c7c20" stroke-width="1.600"/>
<path d="M29.800 88h5.200l-.8 18.200h-3.600z" fill="#1a1a1a"/>
<rect x="29.900" y="108.400" width="5" height="4" fill="#1a1a1a"/>
</svg>
<svg style="left:76px;top:75px" width="26" height="26" viewBox="76 75 26 26">
<defs><linearGradient id="fg" x1="0" y1="0" x2="1" y2="1"><stop offset="0" stop-color="#7a86e0"/><stop offset=".5" stop-color="#4654bc"/><stop offset="1" stop-color="#26308c"/></linearGradient></defs>
<path d="M78.300 77.200h21.600v21.600H80.300l-2-2z" fill="url(#fg)" stroke="#2c3690" stroke-width=".6"/>
<rect x="81.700" y="77.900" width="14.600" height="9" fill="#f4f7fd"/><path d="M90 77.900h6.300v9h-12z" fill="#d9e3f6" opacity=".7"/>
<rect x="84" y="91" width="9.200" height="7.200" fill="#dfe5f3"/><rect x="85.400" y="92.200" width="1.800" height="4.600" fill="#4654bc"/>
<rect x="97.200" y="78.400" width="1.600" height="1.600" fill="#9aa4ec"/>
</svg>
<svg style="left:76px;top:105px" width="27" height="28" viewBox="76 105 27 28">
<rect x="78.500" y="108.400" width="21.900" height="21.800" rx="1.500" fill="#e6e4e9" stroke="#cfcdd4" stroke-width="1"/>
<path d="M85.500 111.800v-2.600h2.400c0-2.800 3.600-2.800 3.600 0h2.200v2.600z" fill="#efeef2" stroke="#c6c4cc" stroke-width=".9"/>
<path d="M83.500 114.600h8.600l3.600 3.600v9.300H83.500z" fill="#f6f5f8" stroke="#c0bec6" stroke-width=".9"/>
<path d="M92.100 114.600v3.600h3.600" fill="none" stroke="#c0bec6" stroke-width=".9"/>
<path d="M85.300 118.500h4.800M85.300 120.800h8.400M85.300 123h8.400M85.300 125.200h8.400" stroke="#cccad2" stroke-width=".9"/>
</svg>
<svg style="left:76px;top:135px" width="28" height="28" viewBox="76 135 28 28">
<defs><linearGradient id="rg" x1="0" y1="0" x2="0" y2="1"><stop offset="0" stop-color="#f0f6fd"/><stop offset=".5" stop-color="#dbe8f8"/><stop offset=".5" stop-color="#c2d8f4"/><stop offset="1" stop-color="#d2e2f6"/></linearGradient></defs>
<circle cx="90.100" cy="149" r="11.300" fill="url(#rg)" stroke="#8fb0e0" stroke-width="1.300"/>
<path d="M84 147.800c0-3.400 2-4.800 5.200-4.800v-2.600l4.800 3.800-4.800 3.800v-2.500c-1.800 0-2.700.6-2.700 2.300z" fill="#2c9a34"/>
<path d="M96.600 150.400c0 3.400-2 4.800-5.200 4.800v2.600l-4.800-3.800 4.800-3.800v2.500c1.800 0 2.700-.6 2.700-2.300z" fill="#2c9a34"/>
</svg>
<svg style="left:193px;top:75px" width="52" height="52" viewBox="193 75 52 52">
<path d="M204.200 97.500V121a2.300 2.300 0 0 0 2.300 2.300h25.800a2.300 2.300 0 0 0 2.300-2.300V97.500L219.200 84.500z" fill="#f3f3f6" stroke="#1a1a1a" stroke-width="1.300" stroke-linejoin="round"/>
<path d="M219.200 78.600l22.600 18-3.100 3.600-19.500-15.500-19.500 15.500-3.100-3.600z" fill="#f0667c" stroke="#1a1a1a" stroke-width="1.300" stroke-linejoin="round"/>
<rect x="195.500" y="101.500" width="14.500" height="18" fill="#fdfdfe"/>
<path d="M199.500 103.200h9M196.800 106.600h4.500M202.800 106.600h4.500M196.500 110.300h10.500M196.800 113.700h4.500M202.800 113.700h4.500M199.500 117.400h9" stroke="#1a1a1a" stroke-width="1.300" stroke-linecap="round"/>
<circle cx="219.200" cy="110.300" r="9.500" fill="#f0667c" stroke="#1a1a1a" stroke-width="1.300"/>
<path d="M219.500 111l6.200 5.600" stroke="#8fb8d0" stroke-width="2.200" stroke-linecap="round"/><path d="M219.500 111l6.200 5.600" stroke="#1a1a1a" stroke-width=".5"/>
<circle cx="216.700" cy="108.300" r="4.200" fill="#aadff0" stroke="#2a4a5c" stroke-width="1.100"/>
</svg>
<svg style="left:270px;top:74px" width="54" height="54" viewBox="270 74 54 54">
<path d="M291.80 84.28L292.80 78.16L301.40 78.16L302.40 84.28L305.00 85.36L310.04 81.73L316.12 87.81L312.49 92.85L313.57 95.45L319.69 96.45L319.69 105.05L313.57 106.05L312.49 108.65L316.12 113.69L310.04 119.77L305.00 116.14L302.40 117.22L301.40 123.34L292.80 123.34L291.80 117.22L289.20 116.14L284.16 119.77L278.08 113.69L281.71 108.65L280.63 106.05L274.51 105.05L274.51 96.45L280.63 95.45L281.71 92.85L278.08 87.81L284.16 81.73L289.20 85.36Z" fill="#fcc15e" stroke="#1a1a1a" stroke-width="2" stroke-linejoin="round"/>
<circle cx="297.100" cy="100.750" r="11.900" fill="#a9adbb" stroke="#1a1a1a" stroke-width="1.500"/>
<circle cx="297.100" cy="100.750" r="7.300" fill="#fff" stroke="#1a1a1a" stroke-width="1.500"/>
<path d="M288.600 96.500a9.600 9.600 0 0 1 13-4.200" fill="none" stroke="#d9dce6" stroke-width="1.200"/>
</svg>
<svg style="left:371px;top:75px" width="52" height="53" viewBox="371 75 52 53">
<rect x="375.700" y="81.400" width="13.600" height="16" rx="1.300" fill="#fff" stroke="#1a1a1a" stroke-width="1.400"/>
<path d="M379.300 81.600v-1.500h1.700c0-2 3-2 3 0h1.700v1.500z" fill="#fff" stroke="#1a1a1a" stroke-width="1.100"/>
<rect x="378.300" y="85" width="3" height="2.800" fill="#555" /><path d="M382.800 85.400h4M382.800 87.400h4" stroke="#1a1a1a" stroke-width="1"/>
<rect x="378.300" y="91" width="3" height="2.800" fill="#555" /><path d="M382.800 91.400h4M382.800 93.400h4" stroke="#1a1a1a" stroke-width="1"/>
<path d="M407.50 80.68L408.00 78.62L411.00 78.62L411.50 80.68L411.95 80.83L413.56 79.46L415.99 81.22L415.18 83.18L415.46 83.56L417.57 83.40L418.50 86.25L416.70 87.36L416.70 87.84L418.50 88.95L417.57 91.80L415.46 91.64L415.18 92.02L415.99 93.98L413.56 95.74L411.95 94.37L411.50 94.52L411.00 96.58L408.00 96.58L407.50 94.52L407.05 94.37L405.44 95.74L403.01 93.98L403.82 92.02L403.54 91.64L401.43 91.80L400.50 88.95L402.30 87.84L402.30 87.36L400.50 86.25L401.43 83.40L403.54 83.56L403.82 83.18L403.01 81.22L405.44 79.46L407.05 80.83Z" fill="#f4e178" stroke="#1a1a1a" stroke-width="1.400" stroke-linejoin="round"/>
<circle cx="409.500" cy="87.600" r="3.600" fill="#f4f4f8" stroke="#1a1a1a" stroke-width="1.300"/>
<path d="M392 87.600h4.500" stroke="#1a1a1a" stroke-width="1.300"/><path d="M396 85.800l2.500 1.800-2.500 1.800z" fill="#1a1a1a"/>
<path d="M409.500 98.500v4.500" stroke="#1a1a1a" stroke-width="1.300"/><path d="M407.700 102.500l1.800 2.500 1.800-2.500z" fill="#1a1a1a"/>
<path d="M399 116.500h-4.500" stroke="#1a1a1a" stroke-width="1.300"/><path d="M395 114.700l-2.500 1.800 2.500 1.800z" fill="#1a1a1a"/>
<path d="M382 105v-4.500" stroke="#1a1a1a" stroke-width="1.300"/><path d="M380.200 101l1.800-2.500 1.800 2.500z" fill="#1a1a1a"/>
<circle cx="382.400" cy="115.600" r="8" fill="#d85a6c" stroke="#1a1a1a" stroke-width="1.400"/>
<circle cx="382.400" cy="115.600" r="5.200" fill="#fbeff0" stroke="#7a2030" stroke-width=".8"/>
<circle cx="382.400" cy="115.600" r="2.600" fill="#d85a6c" stroke="#7a2030" stroke-width=".8"/>
<path d="M382.600 115.400l5.400-5.600" stroke="#1a1a1a" stroke-width="1.100"/><path d="M387 108.200l2.800-2 .3 2.200 2.200.4-2.200 2.800-2.400-.2z" fill="#f5b860" stroke="#1a1a1a" stroke-width=".9"/>
<circle cx="409.500" cy="115.400" r="8.600" fill="#6db6f2" stroke="#1a1a1a" stroke-width="1.400"/>
<path d="M405 115l3.200 3.300 6-6" fill="none" stroke="#1a1a1a" stroke-width="3.200" stroke-linecap="round" stroke-linejoin="round"/>
<path d="M405 115l3.200 3.300 6-6" fill="none" stroke="#fff" stroke-width="1.300" stroke-linecap="round" stroke-linejoin="round"/>
</svg>
<svg style="left:466px;top:75px" width="43" height="53" viewBox="466 75 43 53"><path d="M468.8 90.2c0-4.800 2.800-6.600 6.300-6.600s6.300 1.800 6.300 6.600a.8.800 0 0 1-.8.800h-11a.8.800 0 0 1-.8-.8z" fill="#f7da6e" stroke="#1a1a1a" stroke-width="1.300"/>
<circle cx="475.1" cy="80.9" r="3.500" fill="#f6dfd4" stroke="#1a1a1a" stroke-width="1.300"/><path d="M468.8 107.3c0-4.800 2.800-6.600 6.300-6.600s6.300 1.800 6.300 6.600a.8.800 0 0 1-.8.800h-11a.8.800 0 0 1-.8-.8z" fill="#6fdcb2" stroke="#1a1a1a" stroke-width="1.300"/>
<circle cx="475.1" cy="98" r="3.500" fill="#f6dfd4" stroke="#1a1a1a" stroke-width="1.300"/><path d="M468.8 124.3c0-4.800 2.800-6.600 6.300-6.600s6.300 1.800 6.300 6.600a.8.800 0 0 1-.8.800h-11a.8.800 0 0 1-.8-.8z" fill="#ee5c6c" stroke="#1a1a1a" stroke-width="1.300"/>
<circle cx="475.1" cy="115" r="3.500" fill="#f6dfd4" stroke="#1a1a1a" stroke-width="1.300"/>
<path d="M487.300 82h18.300M487.300 86.400h11.600M487.300 99.100h18.300M487.300 103.400h11.600M487.300 116.200h18.300M487.300 120.500h11.600" stroke="#1a1a1a" stroke-width="1.500" stroke-linecap="round"/>
</svg>
<svg style="left:525px;top:77px" width="24" height="24" viewBox="525 77 24 24">
<path d="M525.300 77.200h18a5.500 5.500 0 0 1 5.500 5.500v12.800a5.500 5.500 0 0 1-5.500 5.500h-8v-3.600h7.400a2.500 2.500 0 0 0 2.500-2.500V83.300a2.500 2.500 0 0 0-2.500-2.500h-13.800v10h-3.600z" fill="#2f86c8"/>
<path d="M525.300 93.200h4.200l4.300-4.200v-4.700h9v9h-4.600l-4.400 4.300v3.400h-8.500z" fill="#f5a21e"/>
<path d="M537.500 89.500l5-5" stroke="#fff" stroke-width=".9"/><circle cx="537.600" cy="89.400" r="1.200" fill="#fde7c0"/>
<path d="M545.200 80.300l3-2.600" stroke="#bfe0f6" stroke-width=".7"/>
</svg>
<svg style="left:566px;top:75px" width="52" height="52" viewBox="566 75 52 52"><path d="M569.4 88.500h32.600v32.800a2.300 2.300 0 0 1-2.300 2.300h-28a2.300 2.300 0 0 1-2.300-2.300z" fill="#f0f0f0" stroke="#3c3c3c" stroke-width="1.200"/>
<path d="M569.4 89.500V84.300a2.300 2.300 0 0 1 2.300-2.300h28a2.300 2.300 0 0 1 2.300 2.300v5.200z" fill="#f0634c" stroke="#3c3c3c" stroke-width="1.200"/>
<path d="M570.0 88.300h31.400" stroke="#c9442f" stroke-width="1"/><rect x="574.0" y="78.300" width="2.800" height="7.400" rx="1.400" fill="#fff" stroke="#3c3c3c" stroke-width="1"/><rect x="580.8" y="78.300" width="2.800" height="7.400" rx="1.400" fill="#fff" stroke="#3c3c3c" stroke-width="1"/><rect x="588.0" y="78.300" width="2.800" height="7.400" rx="1.400" fill="#fff" stroke="#3c3c3c" stroke-width="1"/><rect x="595.0" y="78.300" width="2.800" height="7.400" rx="1.400" fill="#fff" stroke="#3c3c3c" stroke-width="1"/><path d="M578.4 94.400h14.600" stroke="#555" stroke-width="1.300"/><path d="M577.4 100.1h12.5" stroke="#555" stroke-width="1.300"/><rect x="573.6999999999999" y="99.5" width="1.200" height="1.200" fill="#555"/><path d="M577.4 105.3h12.5" stroke="#555" stroke-width="1.300"/><rect x="573.6999999999999" y="104.7" width="1.200" height="1.200" fill="#555"/><path d="M577.4 110.3h12.5" stroke="#555" stroke-width="1.300"/><rect x="573.6999999999999" y="109.7" width="1.200" height="1.200" fill="#555"/><path d="M577.4 115h12.5" stroke="#555" stroke-width="1.300"/><rect x="573.6999999999999" y="114.4" width="1.200" height="1.200" fill="#555"/><path d="M606.1 94.9L606.905 96.395L608.4 97.2L606.905 98.00500000000001L606.1 99.5L605.2950000000001 98.00500000000001L603.8000000000001 97.2L605.2950000000001 96.395Z" fill="#f0c040" stroke="#1a1a1a" stroke-width=".8" stroke-linejoin="round"/>
<path d="M594.300 103l1.300 1.400 2.400-2.600" fill="none" stroke="#222" stroke-width="1.100"/>
<rect x="597" y="100.200" width="13" height="8" fill="#d5e5f8" stroke="#333" stroke-width="1"/>
<path d="M594.800 107.600v-3.200h2.200M612.200 107.600v-3.200H610" fill="none" stroke="#333" stroke-width="1.400"/>
<path d="M591.700 109.700a2.200 2.200 0 0 1 2.200-2.200h18.600a2.200 2.200 0 0 1 2.200 2.200v4h-23z" fill="#5a5d62" stroke="#2a2a2a" stroke-width="1"/>
<path d="M591.700 113.700h23v4a1.800 1.800 0 0 1-1.800 1.800h-19.400a1.800 1.800 0 0 1-1.800-1.800z" fill="#a3a6aa" stroke="#2a2a2a" stroke-width="1"/>
<circle cx="611.800" cy="109.900" r=".9" fill="#e04838"/>
<path d="M594.800 119.500v-5.200h17v5.200z" fill="#3e4146"/>
<rect x="597" y="115.400" width="13" height="8.200" fill="#eef3fb" stroke="#333" stroke-width="1"/>
<rect x="598.600" y="117.800" width="3.400" height="3.600" fill="#3f7fd8"/><path d="M603.400 118.200h5M603.400 120h5M603.400 121.800h5" stroke="#8aa0c0" stroke-width=".9"/>
</svg>
<svg style="left:634px;top:75px" width="51" height="52" viewBox="634 75 51 52"><path d="M637.5 88.500h32.600v32.800a2.300 2.300 0 0 1-2.300 2.300h-28a2.300 2.300 0 0 1-2.300-2.300z" fill="#f0f0f0" stroke="#3c3c3c" stroke-width="1.200"/>
<path d="M637.5 89.500V84.300a2.300 2.300 0 0 1 2.300-2.300h28a2.300 2.300 0 0 1 2.300 2.300v5.200z" fill="#f0634c" stroke="#3c3c3c" stroke-width="1.200"/>
<path d="M638.1 88.300h31.400" stroke="#c9442f" stroke-width="1"/><rect x="642.1" y="78.300" width="2.800" height="7.400" rx="1.400" fill="#fff" stroke="#3c3c3c" stroke-width="1"/><rect x="648.9" y="78.300" width="2.800" height="7.400" rx="1.400" fill="#fff" stroke="#3c3c3c" stroke-width="1"/><rect x="656.1" y="78.300" width="2.800" height="7.400" rx="1.400" fill="#fff" stroke="#3c3c3c" stroke-width="1"/><rect x="663.1" y="78.300" width="2.800" height="7.400" rx="1.400" fill="#fff" stroke="#3c3c3c" stroke-width="1"/><path d="M646.5 94.400h14.600" stroke="#555" stroke-width="1.300"/><path d="M645.5 100.1h12" stroke="#555" stroke-width="1.300"/><rect x="641.8" y="99.5" width="1.200" height="1.200" fill="#555"/><path d="M645.5 105.3h12" stroke="#555" stroke-width="1.300"/><rect x="641.8" y="104.7" width="1.200" height="1.200" fill="#555"/><path d="M645.5 110.3h12" stroke="#555" stroke-width="1.300"/><rect x="641.8" y="109.7" width="1.200" height="1.200" fill="#555"/><path d="M645.5 115h12" stroke="#555" stroke-width="1.300"/><rect x="641.8" y="114.4" width="1.200" height="1.200" fill="#555"/><path d="M662.0 99.6l1.500 1.600 2.800-3" fill="none" stroke="#222" stroke-width="1.200"/><path d="M662.0 104.8l1.500 1.600 2.800-3" fill="none" stroke="#222" stroke-width="1.200"/><path d="M662.0 109.8l1.500 1.600 2.800-3" fill="none" stroke="#222" stroke-width="1.200"/><path d="M674.4 94.9L675.2049999999999 96.395L676.6999999999999 97.2L675.2049999999999 98.00500000000001L674.4 99.5L673.595 98.00500000000001L672.1 97.2L673.595 96.395Z" fill="#f0c040" stroke="#1a1a1a" stroke-width=".8" stroke-linejoin="round"/>
<g transform="translate(663.100 119.900) rotate(-41.400)">
<path d="M0 0l5.200-2.500h14.400v5H5.200z" fill="#4a9dd6" stroke="#1a1a1a" stroke-width="1.100" stroke-linejoin="round"/>
<path d="M0 0l5.200-2.500v5z" fill="#f4d060" stroke="#1a1a1a" stroke-width="1" stroke-linejoin="round"/>
<path d="M0 0l2-1v2z" fill="#1a1a1a"/>
<path d="M5.200 0h14" stroke="#2a6aa0" stroke-width=".8"/>
<path d="M19.600-2.500h2.600a1.800 1.800 0 0 1 1.800 1.800v1.400a1.800 1.800 0 0 1-1.800 1.800h-2.600z" fill="#f0634c" stroke="#1a1a1a" stroke-width="1.100"/>
</g></svg>
<svg style="left:704px;top:77px" width="19" height="24" viewBox="704 77 19 24">
<path d="M705.300 77.200h11l6 6v16.300a1.200 1.200 0 0 1-1.200 1.200h-15.800a1.200 1.200 0 0 1-1.200-1.200V78.400a1.200 1.200 0 0 1 1.200-1.200z" fill="#5a2eae"/>
<path d="M716.300 77.200l6 6h-6z" fill="#9c82d6"/>
<rect x="708" y="88.400" width="11.400" height="6" rx="1" fill="none" stroke="#3b1c80" stroke-width="1"/>
<path d="M710.800 90.200h6.600M710.800 92.500h6.600" stroke="#2c1468" stroke-width="1.500"/><path d="M708.800 90.200h1M708.800 92.500h1" stroke="#c8b8f0" stroke-width="1.200"/>
</svg>
<svg style="left:700px;top:106px" width="26" height="26" viewBox="700 106 26 26">
<rect x="703.300" y="110.400" width="16.500" height="20.200" rx="1" fill="#c9865e" stroke="#2a1c18" stroke-width="1.100"/>
<path d="M701.800 112.500v16" stroke="#2a1c18" stroke-width="1.300"/>
<rect x="705.600" y="112.400" width="12" height="16.400" fill="#fbfbfb" stroke="#5a4034" stroke-width=".7"/>
<path d="M708.700 112.800v-2.400h1.600c0-3 4.400-3 4.400 0h1.600v2.400z" fill="#8fd8b4" stroke="#1e3a30" stroke-width="1"/>
<path d="M707.300 115.800h8.800M707.300 118h8.800M707.300 120.200h8.800M707.300 122.400h6M707.300 124.600h5M707.300 126.800h5" stroke="#333" stroke-width="1"/>
<circle cx="719.900" cy="126.200" r="4.600" fill="#e85a60" stroke="#5c1a20" stroke-width="1"/>
<path d="M719.900 123.400v5.600M717.100 126.200h5.600" stroke="#fde8e8" stroke-width="1.700"/>
</svg>
<svg style="left:763px;top:75px" width="41" height="53" viewBox="763 75 41 53">
<rect x="767.300" y="83.300" width="32.300" height="40.200" rx="1.200" fill="#dba98e" stroke="#3a2e4e" stroke-width="1.300"/>
<rect x="770.800" y="86.800" width="25.300" height="33.600" fill="#ecebfb" stroke="#3a2e4e" stroke-width="1"/>
<path d="M775.500 86.200v-3.400a1 1 0 0 1 1-1h3.200c.3-4 6.800-4 7.100 0h3.200a1 1 0 0 1 1 1v3.400z" fill="#6b6cba" stroke="#2c2a50" stroke-width="1.100"/>
<circle cx="783.200" cy="81.600" r="1" fill="#ecebfb"/>
<circle cx="776.4" cy="93.9" r="3.500" fill="#e8586c" stroke="#4a1828" stroke-width="1"/><path d="M774.8 93.9l1.200 1.300 2.200-2.500" fill="none" stroke="#4a1828" stroke-width="1"/><circle cx="776.4" cy="104.1" r="3.500" fill="#e8586c" stroke="#4a1828" stroke-width="1"/><path d="M774.8 104.1l1.200 1.300 2.200-2.500" fill="none" stroke="#4a1828" stroke-width="1"/><circle cx="776.4" cy="114.2" r="3.500" fill="#e8586c" stroke="#4a1828" stroke-width="1"/><path d="M774.8 114.2l1.200 1.300 2.200-2.500" fill="none" stroke="#4a1828" stroke-width="1"/>
<path d="M782.500 90.500h4M782.500 93.900h11.500M782.500 97.300h11.500M782.500 100.700h4M782.500 104.100h11.500M782.500 107.500h11.500M782.500 110.800h4M782.500 114.200h11.500M782.500 117.600h11.500" stroke="#3a3a4a" stroke-width="1.200"/>
</svg>
<svg style="left:839px;top:74px" width="55" height="55" viewBox="839 74 55 55">
<rect x="843.600" y="81.800" width="36.200" height="42.400" rx="2" fill="#6c6672" stroke="#1a1a1a" stroke-width="1.500"/>
<rect x="847" y="86" width="29.400" height="35" fill="#eceef2" stroke="#1a1a1a" stroke-width="1.200"/>
<path d="M853.600 86.300v-3.200a1 1 0 0 1 1-1h3.800c.6-4.600 5.600-4.600 6.200 0h3.800a1 1 0 0 1 1 1v3.200z" fill="#f1a962" stroke="#1a1a1a" stroke-width="1.200"/>
<circle cx="861.500" cy="80.800" r=".8" fill="#1a1a1a"/>
<path d="M850.800 92l2 2.200 3.800-4.300M850.800 99.300l2 2.200 3.800-4.300M850.800 106.600l2 2.200 3.800-4.300M850.800 113.900l2 2.200 3.800-4.300" fill="none" stroke="#1a1a1a" stroke-width="1.500"/>
<path d="M860.200 91h12.500M860.200 94.800h12.500M860.200 98.400h12.500M860.200 102h12.500M860.200 105.700h12.500M860.200 109.400h12.500M860.200 113h12.500M860.200 116.700h12.500" stroke="#1a1a1a" stroke-width="1.300"/>
<circle cx="879" cy="105.900" r="10.200" fill="#6c6672" stroke="#1a1a1a" stroke-width="1.500"/>
<clipPath id="pc"><circle cx="879" cy="105.900" r="9.400"/></clipPath>
<ellipse cx="879" cy="114.500" rx="7.300" ry="5.800" fill="#6db6f2" stroke="#1a1a1a" stroke-width="1.200" clip-path="url(#pc)"/>
<circle cx="878.800" cy="102.800" r="3.500" fill="#f6dfd4" stroke="#1a1a1a" stroke-width="1.200"/>
</svg>
<svg style="left:922px;top:74px" width="50" height="55" viewBox="922 74 50 55">
<path d="M931.5 79.5h4M933.5 77.5v4" stroke="#1a1a1a" stroke-width="1.100"/><path d="M960.4 81.2h4M962.4 79.2v4" stroke="#1a1a1a" stroke-width="1.100"/><circle cx="927.5" cy="91" r="1.8" fill="#f4d860" stroke="#1a1a1a" stroke-width="1"/><circle cx="966.8" cy="93.9" r="1.8" fill="#f4d860" stroke="#1a1a1a" stroke-width="1"/>
<rect x="932.200" y="85.600" width="30.400" height="38.600" rx="1.200" fill="#d9456e" stroke="#1a1a1a" stroke-width="1.500"/>
<path d="M935.600 89.400h24v31.400h-16l-8-8z" fill="#e8f6f6" stroke="#1a1a1a" stroke-width="1.100"/>
<path d="M935.600 112.800h8v8z" fill="#f4e070" stroke="#1a1a1a" stroke-width="1"/>
<path d="M940.300 85.200h13.800v4.800h-13.800z M942 80.600h10.400v4.600H942z" fill="#f7e172" stroke="#1a1a1a" stroke-width="1.200"/>
<path d="M943.500 93.200h1.200M946 93.200h1.200M948.500 93.200h1.200" stroke="#666" stroke-width="1.200"/>
<rect x="937.900" y="95.700" width="3.600" height="3.600" fill="#f4e070" stroke="#1a1a1a" stroke-width="1"/><rect x="937.900" y="101.500" width="3.600" height="3.600" fill="#f4e070" stroke="#1a1a1a" stroke-width="1"/><rect x="937.900" y="107.500" width="3.600" height="3.600" fill="#f4e070" stroke="#1a1a1a" stroke-width="1"/>
<path d="M943.500 97.300h6" stroke="#1a1a1a" stroke-width="1.100"/>
<path d="M958.700 112.600l8 8" stroke="#1a1a1a" stroke-width="4.200" stroke-linecap="round"/><path d="M958.700 112.600l8 8" stroke="#2f8fd8" stroke-width="2.400" stroke-linecap="round"/>
<circle cx="959.400" cy="113.300" r="1.500" fill="#f4e070" stroke="#1a1a1a" stroke-width=".8"/>
<circle cx="952.500" cy="106.200" r="8.300" fill="#1c88c8" stroke="#1a1a1a" stroke-width="1.300"/>
<circle cx="952.500" cy="106.200" r="5.400" fill="#c2f0f2" stroke="#1a1a1a" stroke-width="1"/>
<text x="952.500" y="109.600" font-family="Liberation Sans, sans-serif" font-weight="700" font-size="9" text-anchor="middle" fill="#1a1a1a">?</text>
</svg>
<svg style="left:983px;top:74px" width="55" height="55" viewBox="983 74 55 55">
<path d="M993.600 93.900L1002 98.600L1010.300 88.100L1018.400 92.800L1027 79.500" fill="none" stroke="#2a2a30" stroke-width="1.100"/>
<path d="M989.5 121.200V105.2a2 2 0 0 1 2-2h4.2999999999999545a2 2 0 0 1 2 2V121.200z" fill="#3d4552" stroke="#2a2a30" stroke-width=".8"/><path d="M998.3 121.200V110.4a2 2 0 0 1 2-2h3.300000000000068a2 2 0 0 1 2 2V121.200z" fill="#29b1f1" stroke="#2a2a30" stroke-width=".8"/><path d="M1006.5 121.200V99.9a2 2 0 0 1 2-2h3.7000000000000455a2 2 0 0 1 2 2V121.200z" fill="#19b04a" stroke="#2a2a30" stroke-width=".8"/><path d="M1015 121.200V104.6a2 2 0 0 1 2-2h3.2999999999999545a2 2 0 0 1 2 2V121.200z" fill="#ff9212" stroke="#2a2a30" stroke-width=".8"/><path d="M1022.8 121.200V91.6a2 2 0 0 1 2-2h4.2999999999999545a2 2 0 0 1 2 2V121.200z" fill="#f74222" stroke="#2a2a30" stroke-width=".8"/>
<rect x="986.700" y="121.400" width="46.800" height="3.200" rx="1.500" fill="#e4e0dc" stroke="#2a2a30" stroke-width="1.100"/>
<circle cx="993.6" cy="93.9" r="2" fill="#3d4552" stroke="#2a2a30" stroke-width="1"/><circle cx="1002" cy="98.6" r="2" fill="#29b1f1" stroke="#2a2a30" stroke-width="1"/><circle cx="1010.3" cy="88.1" r="2" fill="#19b04a" stroke="#2a2a30" stroke-width="1"/><circle cx="1018.4" cy="92.8" r="2" fill="#ff9212" stroke="#2a2a30" stroke-width="1"/><circle cx="1027" cy="79.5" r="2" fill="#e0503c" stroke="#2a2a30" stroke-width="1"/>
</svg>
<svg style="left:1057px;top:74px" width="50" height="55" viewBox="1057 74 50 55">
<path d="M1061.300 80.700a3 3 0 0 1 3-3h34.500v14.600h-4.300v24.500a3 3 0 0 1-3 3h-27.200a3 3 0 0 1-3-3z" fill="#fff" stroke="#1a1a1a" stroke-width="1.900" stroke-linejoin="round"/>
<path d="M1094.300 92.300V81.500a4 4 0 0 1 8 0v8.400a2.400 2.400 0 0 1-2.400 2.400z" fill="#f9d998" stroke="#1a1a1a" stroke-width="1.800"/>
<rect x="1065.700" y="83.200" width="6.300" height="6.200" rx="1" fill="#48c088" stroke="#1a1a1a" stroke-width="1.500"/>
<rect x="1065.700" y="94.500" width="6.300" height="6.200" rx="1" fill="#48c088" stroke="#1a1a1a" stroke-width="1.500"/>
<rect x="1065.700" y="105.700" width="6.300" height="6.200" rx="1" fill="#48c088" stroke="#1a1a1a" stroke-width="1.500"/>
<path d="M1080.600 89.200h8M1076.300 89.200h1.200M1076.600 100.200h12M1076.600 111.500h5M1078.400 119.800h1.200" stroke="#1a1a1a" stroke-width="1.500" stroke-linecap="round"/>
<path d="M1083.200 126V110.500c0-3.400 4-3.400 4.200-.3l.5 5.800c.2 2.400 3.200 2.400 3.400 0l.4-17.400c5.200 2.600 8.300 7.600 8.300 13.500 0 5-1.400 9.600-3 13.900z" fill="#f9d2c2" stroke="#1a1a1a" stroke-width="1.700" stroke-linejoin="round"/>
<rect x="1081" y="124.700" width="22" height="3" fill="#fcfcfd"/>
</svg>
<svg style="left:1152px;top:73px" width="49" height="56" viewBox="1152 73 49 56">
<path d="M1160 77.500l3.800 2.800M1156.800 83.500l4.400 1.300M1156.800 90.300l4.400-1.300M1192.800 77.500l-3.800 2.800M1196 83.500l-4.400 1.300M1196 90.300l-4.400-1.300" stroke="#1a1a1a" stroke-width="1.300" stroke-linecap="round"/>
<path d="M1157 104.500c0-2 1.500-3.300 3.500-3.300h32c2 0 3.500 1.300 3.500 3.300v16.200c-7-1.600-14-1.200-19.500 2.800-5.500-4-12.500-4.400-19.500-2.800z" fill="#e8717e" stroke="#1a1a1a" stroke-width="1.300" stroke-linejoin="round"/>
<path d="M1159.300 101.800c5.800-2.600 12-2.200 17.200 1.800 5.200-4 11.400-4.400 17.200-1.800v16.400c-5.800-1.800-12-1.200-17.200 2.400-5.200-3.600-11.400-4.200-17.200-2.400z" fill="#dcd9f8" stroke="#1a1a1a" stroke-width="1.200" stroke-linejoin="round"/>
<path d="M1176.500 103.600v17" stroke="#1a1a1a" stroke-width="1.200"/>
<path d="M1162 108.500c3.800-.8 7.600-.5 11 1M1162 112c3.800-.8 7.600-.5 11 1M1162 115.500c3.800-.8 7.600-.5 11 1M1180 112.700c1.600-.7 3.200-1 5-1.200M1180 116.200c3-1.200 7-1.600 11-1" fill="none" stroke="#1a1a1a" stroke-width="1.100"/>
<path d="M1185.800 109.300l4.800-1.500v6.800l-4.800 1.200z" fill="#f4f2fe" stroke="#1a1a1a" stroke-width="1"/>
<path d="M1171 104.200h10.800v7.400c0 2-2.400 3.600-5.400 3.600s-5.400-1.600-5.400-3.600z" fill="#3d4858" stroke="#1a1a1a" stroke-width="1.100"/>
<path d="M1171.300 107h10.200M1171.300 109.600h10.200M1172 112.200h8.800" stroke="#8a96a8" stroke-width=".9"/>
<path d="M1176.400 77.600c7 0 12.600 5.500 12.600 12.400 0 4.800-2.800 7.800-5 10.600-.9 1.200-1.500 2.600-1.700 4h-11.800c-.2-1.400-.8-2.800-1.700-4-2.200-2.800-5-5.800-5-10.600 0-6.900 5.600-12.400 12.600-12.400z" fill="#fbe862" stroke="#1a1a1a" stroke-width="1.400"/>
<path d="M1168 82.500c-3.800 4.400-3.600 10.400.8 15.600 1.300 1.500 2 3.400 2.400 5.600h2.600c-.4-2.400-1.200-4.400-2.600-6-4-4.600-4.800-9.800-3.200-15.200z" fill="#f8d648"/>
<ellipse cx="1169.500" cy="92" rx="2.300" ry="1.700" fill="#f8a0a8"/><ellipse cx="1183.500" cy="92" rx="2.300" ry="1.700" fill="#f8a0a8"/>
<circle cx="1171.200" cy="89" r=".9" fill="#1a1a1a"/><circle cx="1181.800" cy="89" r=".9" fill="#1a1a1a"/>
<path d="M1174.800 89.600c.6 1.600 2.800 1.600 3.400 0" fill="none" stroke="#1a1a1a" stroke-width="1"/>
</svg>
<svg style="left:1236px;top:74px" width="55" height="55" viewBox="1236 74 55 55">
<path d="M1245.600 92v-6.500a1.500 1.500 0 0 1 1.500-1.500h32.600a1.500 1.500 0 0 1 1.500 1.500V92z" fill="#45484e" stroke="#1a1a1a" stroke-width="1.300"/>
<rect x="1249.500" y="77.500" width="27.900" height="14.800" rx="1" fill="#d5e5f8" stroke="#1a1a1a" stroke-width="1.400"/>
<path d="M1240 94.500a2.600 2.600 0 0 1 2.600-2.600h41.200a2.600 2.600 0 0 1 2.600 2.600v5.600H1240z" fill="#606468" stroke="#1a1a1a" stroke-width="1.400"/>
<path d="M1240 100h46.400v12.800a2.800 2.800 0 0 1-2.800 2.800h-40.800a2.800 2.800 0 0 1-2.800-2.800z" fill="#a2a6aa" stroke="#1a1a1a" stroke-width="1.400"/>
<rect x="1277" y="94.300" width="5.600" height="2.800" rx="1.400" fill="#e0483c" stroke="#5a1a14" stroke-width=".8"/>
<path d="M1245.600 115.600v-12.600h35.600v12.600z" fill="#45484e" stroke="#1a1a1a" stroke-width="1.200"/>
<rect x="1249.500" y="107" width="27.900" height="17.500" fill="#dde9f8" stroke="#1a1a1a" stroke-width="1.400"/>
<rect x="1253.500" y="114.500" width="6.600" height="6.600" fill="#4a8fe0" stroke="#1c4a8c" stroke-width="1"/>
<path d="M1263.500 111.200h10.500M1252.800 111.200h8M1263.500 114.700h10.500M1263.500 118h10.500M1263.500 121.300h10.500" stroke="#3a4a60" stroke-width="1.200"/>
</svg>
<svg style="left:1299px;top:74px" width="50" height="52" viewBox="1299 74 50 52">
<defs><linearGradient id="pg" x1="0" y1="0" x2="1" y2="1"><stop offset="0" stop-color="#d8d8d8"/><stop offset=".5" stop-color="#b4b4b4"/><stop offset="1" stop-color="#8c8c8c"/></linearGradient>
<linearGradient id="pg2" x1="0" y1="0" x2="1" y2="1"><stop offset="0" stop-color="#fdfdfd"/><stop offset=".6" stop-color="#ececec"/><stop offset="1" stop-color="#c4c4c4"/></linearGradient></defs>
<rect x="1302.500" y="78" width="43" height="44" rx="3" fill="url(#pg)" stroke="#4a4a4a" stroke-width="1.400"/>
<path d="M1309.500 81h33.500v38.500h-33.500l-1.500-1.500v-16l-1.500-1.500v-4l1.500-1.500v-12.500z" fill="url(#pg2)" stroke="#8a8a8a" stroke-width=".7"/>
<path d="M1324.800 89.500c2.600-.6 2.600 3.600 2 7.200-.8 5.400-4.600 13.600-8.600 17.800-2.200 2.200-4 .6-2-1.800 4.200-4.600 15-7.600 22.800-6.600 3.400.4 3.200 3 .2 2.800-6.600-.6-13.400-8.200-15-14.600-.6-2.400-.6-4.400.6-4.800z" fill="none" stroke="#e03838" stroke-width="1.500"/>
<text x="1325.600" y="119.600" font-family="Liberation Sans, sans-serif" font-weight="700" font-size="10.800" text-anchor="middle" fill="#f59a1c" stroke="#3a2408" stroke-width="1.800" paint-order="stroke" letter-spacing=".3">PDF</text>
</svg>
<svg style="left:1365px;top:76px" width="25" height="24" viewBox="1365 76 25 24">
<defs><linearGradient id="vg" x1="0" y1="0" x2="1" y2="1"><stop offset="0" stop-color="#fff"/><stop offset=".6" stop-color="#eef4fc"/><stop offset="1" stop-color="#b8d0f0"/></linearGradient></defs>
<path d="M1366.600 77.600h11.600l4.800 4.800v16h-16.400z" fill="url(#vg)" stroke="#9ab0d0" stroke-width="1"/>
<path d="M1378.200 77.600v4.800h4.800" fill="#e4ecf8" stroke="#9ab0d0" stroke-width=".9"/>
<path d="M1381.500 93.500l5.200 4" stroke="#c8a020" stroke-width="3" stroke-linecap="round"/><path d="M1381.800 93.700l4.600 3.500" stroke="#f4d860" stroke-width="1.400" stroke-linecap="round"/>
<circle cx="1378.200" cy="90.500" r="4.600" fill="#cfe6f4" fill-opacity=".85" stroke="#5a7488" stroke-width="1.300"/>
</svg>
<svg style="left:1365px;top:108px" width="25" height="22" viewBox="1365 108 25 22">
<defs><linearGradient id="sg" x1="0" y1="0" x2="1" y2="1"><stop offset="0" stop-color="#f8fafe"/><stop offset="1" stop-color="#a8bce8"/></linearGradient></defs>
<path d="M1366.800 111.500c1.200-1.800 8-1.800 9.200 0v15.500c-1.600-1.200-3-1.400-4.600 0-1.600-1.400-3-1.200-4.600.6z" fill="#e4e4e4" stroke="#8a9098" stroke-width=".9"/>
<rect x="1369" y="109.600" width="5" height="2" fill="#c8c8c8" stroke="#909090" stroke-width=".6"/>
<path d="M1366.500 127.200l1.300 1" stroke="#222" stroke-width="1.200"/>
<rect x="1376.500" y="112.300" width="12" height="15.800" fill="url(#sg)" stroke="#5a5a5a" stroke-width="1"/>
<path d="M1388.700 112.300v16.400h-12.400" fill="none" stroke="#1a1a1a" stroke-width="1.300"/>
</svg>
<svg style="left:1365px;top:138px" width="24" height="21" viewBox="1365 138 24 21">
<defs><linearGradient id="tg" x1="0" y1="0" x2="1" y2="1"><stop offset="0" stop-color="#86a4ec"/><stop offset=".5" stop-color="#4a74d8"/><stop offset="1" stop-color="#2850b8"/></linearGradient></defs>
<rect x="1366.500" y="139.500" width="21" height="18" rx="1.800" fill="#fdfdff" stroke="#8ea4cc" stroke-width="1"/>
<rect x="1369.200" y="142.200" width="15.600" height="12.600" fill="url(#tg)" stroke="#2c4ca0" stroke-width=".7"/>
<path d="M1371 145.200h4.500M1371 147.600h11.500M1371 150h11.500" stroke="#c8d8fa" stroke-width="1"/>
</svg>
<svg style="left:1499px;top:73px" width="45" height="56" viewBox="1499 73 45 56">
<path d="M1507.800 99V91a13.500 13.500 0 0 1 27 0v8h-4.600v-8a8.900 8.900 0 0 0-17.800 0v8z" fill="#e2e6ea" stroke="#1a1a1a" stroke-width="1.500" stroke-linejoin="round"/>
<path d="M1531.500 86.500c1 2 1.300 3 1.300 5.500v6" fill="none" stroke="#fff" stroke-width="1.200"/>
<rect x="1503.500" y="98.800" width="36" height="25.500" rx="1" fill="#f59e0b" stroke="#1a1a1a" stroke-width="1.600"/>
<path d="M1521.250 104.700a4.300 4.300 0 0 1 2.500 7.800l1 5.200h-7l1-5.200a4.300 4.300 0 0 1 2.500-7.800z" fill="#2a2a3a"/>
</svg>
<svg style="left:1571px;top:74px" width="50" height="52" viewBox="1571 74 50 52">
<path d="M1594.700 90L1582 103M1594.700 90v14M1596 92l13 18M1609 97l-9 8" stroke="#8a8a8a" stroke-width="1.200" fill="none"/>
<g transform="rotate(14 1594.700 85.300)"><path d="M1594.7 78.278L1601.4 82.7L1594.7 87.122L1588.0 82.7Z" fill="#fbe878" stroke="#e8c838" stroke-width=".6" stroke-linejoin="round"/><path d="M1588.0 82.7L1594.7 87.122V92.322L1588.0 87.9Z" fill="#e8c838" stroke="#e8c838" stroke-width=".6" stroke-linejoin="round"/><path d="M1601.4 82.7L1594.7 87.122V92.322L1601.4 87.9Z" fill="#c8a020" stroke="#c8a020" stroke-width=".6" stroke-linejoin="round"/></g>
<g transform="rotate(14 1610.800 92.300)"><path d="M1610.8 85.74000000000001L1616.8 89.7L1610.8 93.66L1604.8 89.7Z" fill="#fb9a80" stroke="#f05838" stroke-width=".6" stroke-linejoin="round"/><path d="M1604.8 89.7L1610.8 93.66V98.86L1604.8 94.9Z" fill="#f05838" stroke="#f05838" stroke-width=".6" stroke-linejoin="round"/><path d="M1616.8 89.7L1610.8 93.66V98.86L1616.8 94.9Z" fill="#d03818" stroke="#d03818" stroke-width=".6" stroke-linejoin="round"/></g>
<g transform="rotate(14 1580.100 105.600)"><path d="M1580.1 98.842L1586.3999999999999 103.0L1580.1 107.158L1573.8 103.0Z" fill="#fb9a80" stroke="#f05838" stroke-width=".6" stroke-linejoin="round"/><path d="M1573.8 103.0L1580.1 107.158V112.358L1573.8 108.2Z" fill="#f05838" stroke="#f05838" stroke-width=".6" stroke-linejoin="round"/><path d="M1586.3999999999999 103.0L1580.1 107.158V112.358L1586.3999999999999 108.2Z" fill="#d03818" stroke="#d03818" stroke-width=".6" stroke-linejoin="round"/></g>
<g transform="rotate(14 1594.700 107.800)"><path d="M1594.7 100.778L1601.4 105.2L1594.7 109.622L1588.0 105.2Z" fill="#a8e890" stroke="#48b838" stroke-width=".6" stroke-linejoin="round"/><path d="M1588.0 105.2L1594.7 109.622V114.822L1588.0 110.4Z" fill="#48b838" stroke="#48b838" stroke-width=".6" stroke-linejoin="round"/><path d="M1601.4 105.2L1594.7 109.622V114.822L1601.4 110.4Z" fill="#208018" stroke="#208018" stroke-width=".6" stroke-linejoin="round"/></g>
<g transform="rotate(14 1609.800 114.400)"><path d="M1609.8 107.37800000000001L1616.5 111.80000000000001L1609.8 116.22200000000001L1603.1 111.80000000000001Z" fill="#b8c8fb" stroke="#6888f0" stroke-width=".6" stroke-linejoin="round"/><path d="M1603.1 111.80000000000001L1609.8 116.22200000000001V121.42200000000001L1603.1 117.00000000000001Z" fill="#6888f0" stroke="#6888f0" stroke-width=".6" stroke-linejoin="round"/><path d="M1616.5 111.80000000000001L1609.8 116.22200000000001V121.42200000000001L1616.5 117.00000000000001Z" fill="#3050c8" stroke="#3050c8" stroke-width=".6" stroke-linejoin="round"/></g>
</svg>
<svg style="left:1649px;top:76px" width="26" height="26" viewBox="1649 76 26 26">
<circle cx="1661.900" cy="88.900" r="10.400" fill="#dce8f4" stroke="#1c3450" stroke-width="2.200"/>
<text x="1661.900" y="94.400" font-family="Liberation Sans, sans-serif" font-weight="700" font-size="15" text-anchor="middle" fill="#8a2020">?</text>
</svg>
<svg style="left:1649px;top:107px" width="26" height="25" viewBox="1649 107 26 25">
<defs><linearGradient id="ig" x1="0" y1="0" x2="1" y2="1"><stop offset="0" stop-color="#0c60c8"/><stop offset=".5" stop-color="#1878e0"/><stop offset=".5" stop-color="#2a8cf0"/><stop offset="1" stop-color="#1c7ce4"/></linearGradient></defs>
<circle cx="1661.900" cy="119.100" r="10.600" fill="url(#ig)" stroke="#0a50b0" stroke-width="1"/>
<circle cx="1661.900" cy="113.600" r="1.700" fill="#f8dc50" stroke="#5a4808" stroke-width=".5"/>
<path d="M1659.600 117h3.800v8.400h-2.600v-6.400h-1.200z" fill="#f8dc50" stroke="#5a4808" stroke-width=".5"/>
</svg>
<svg style="left:655px;top:220px" width="48" height="41" viewBox="655 220 48 41">
<path d="M670.500 225.500a2 2 0 0 1 2-2h20l7 6.800v23a2 2 0 0 1-2 2h-27z" fill="#4aa8f8" stroke="#1a1a1a" stroke-width="1.400" stroke-linejoin="round"/>
<path d="M692.500 223.500v5a2 2 0 0 0 2 2h5z" fill="#2a88e0" stroke="#1a1a1a" stroke-width="1.200" stroke-linejoin="round"/>
<path d="M695.500 232v22.500h3.200V232z" fill="#78c0fb" opacity=".8"/>
<path d="M659.200 228a2 2 0 0 1 2-2h19.600l7.600 7.200v22a2 2 0 0 1-2 2h-25.200a2 2 0 0 1-2-2z" fill="#dce9f8" stroke="#1a1a1a" stroke-width="1.400" stroke-linejoin="round"/>
<path d="M680.800 226v5.200a2 2 0 0 0 2 2h5.600z" fill="#f4f8fd" stroke="#1a1a1a" stroke-width="1.200" stroke-linejoin="round"/>
<path d="M685.800 235v21h2V235z" fill="#eef4fb"/>
<path d="M680.300 241.200h9.800v-2.400l7 4.300-7 4.300V245h-9.800a.8.800 0 0 1-.8-.8v-2.200a.8.800 0 0 1 .8-.8z" fill="#f0607a" stroke="#1a1a1a" stroke-width="1.200" stroke-linejoin="round"/>
</svg>
<svg style="left:207px;top:437px" width="30" height="36" viewBox="207 437 30 36">
<path d="M209.700 441.500a2.600 2.600 0 0 1 2.600-2.600h19.800a2.600 2.600 0 0 1 2.600 2.600v23.200l-6.600 6.400h-15.800a2.600 2.600 0 0 1-2.600-2.600z" fill="#fff" stroke="#1a1a1a" stroke-width="1.500" stroke-linejoin="round"/>
<path d="M211.700 441.300h21v22l-5.500 5.800h-15.500z" fill="#eaeef8"/>
<path d="M228.100 471v-4a2.600 2.600 0 0 1 2.600-2.600h4z" fill="#f08a8c" stroke="#1a1a1a" stroke-width="1.300" stroke-linejoin="round"/>
<rect x="208.600" y="448.800" width="2.400" height="1.800" fill="#fff0cb"/><rect x="208.600" y="452.700" width="2.400" height="1.600" fill="#fff0cb"/>
<path d="M212 467.500h12.600" stroke="#1a1a1a" stroke-width="1.400" stroke-linecap="round"/>
<g transform="translate(211.900 467) rotate(-45.200)">
<path d="M0 0l4.600-3.100h17.600v6.200H4.600z" fill="#f8bd52" stroke="#1a1a1a" stroke-width="1.300" stroke-linejoin="round"/>
<path d="M0 0l4.600-3.100v6.200z" fill="#fff" stroke="#1a1a1a" stroke-width="1.200" stroke-linejoin="round"/><path d="M0 0l2.400-1.600v3.200z" fill="#1a1a1a"/>
<path d="M22.200-3.100h3.600a2 2 0 0 1 2 2v2.200a2 2 0 0 1-2 2h-3.600z" fill="#f8989c" stroke="#1a1a1a" stroke-width="1.300"/>
<path d="M8.500 0h1M11.500 0h7" stroke="#3a2408" stroke-width="1.300"/>
</g></svg>
<svg style="left:151px;top:1052px" width="22" height="20" viewBox="151 1052 22 20">
<rect x="152" y="1053" width="20.500" height="18" fill="#fdfdfe" stroke="#3a5aa8" stroke-width="1"/>
<rect x="152.500" y="1053.500" width="19.500" height="4" fill="#4a74d0"/>
<path d="M153 1061.300h19M153 1064.600h19M153 1067.900h19M158 1058v12.500M163 1058v12.500M168 1058v12.500" stroke="#8ea4d8" stroke-width="1"/>
<circle cx="155.800" cy="1056" r="3.600" fill="#e85030" stroke="#a82810" stroke-width=".7"/><circle cx="154.800" cy="1055" r="1.200" fill="#f8a890"/>
</svg>
<div style="left:1576.5px;top:1048.5px;width:27.5px;height:28px;box-sizing:border-box;border:1px solid #e2b23e;border-radius:3px;background:linear-gradient(180deg,#fde08c 0%,#fbd66c 50%,#fbd25c 75%,#fde59a 100%)"></div>
<svg style="left:1580px;top:1056px" width="20" height="15" viewBox="1580 1056 20 15">
<rect x="1580.600" y="1056.600" width="18.800" height="13.400" fill="#fff" stroke="#5a5a5a" stroke-width="1.800"/>
<path d="M1580.300 1061h19.400M1580.300 1065.600h19.400M1585.200 1056.300v14M1590 1056.300v14M1594.800 1056.300v14" stroke="#5a5a5a" stroke-width="1.700"/>
</svg>
<svg style="left:1606px;top:1054px" width="23" height="19" viewBox="1606 1054 23 19">
<rect x="1607.300" y="1054.800" width="20.400" height="16.600" fill="#a8a8a8" stroke="#7a7a7a" stroke-width="1"/>
<rect x="1611.800" y="1057.600" width="11.400" height="12" fill="#f4f4f4" stroke="#6a6a6a" stroke-width="1"/>
<path d="M1614 1061h7M1614 1063.600h7M1614 1066.200h7" stroke="#9a9a9a" stroke-width="1"/>
</svg>
<svg style="left:1634px;top:1054px" width="23" height="19" viewBox="1634 1054 23 19">
<defs><linearGradient id="bg2" x1="0" y1="0" x2="1" y2="1"><stop offset="0" stop-color="#d0d0d0"/><stop offset="1" stop-color="#9a9a9a"/></linearGradient></defs>
<rect x="1635.300" y="1054.800" width="20.400" height="16.600" fill="url(#bg2)" stroke="#7a7a7a" stroke-width="1"/>
<rect x="1636.800" y="1056" width="4.600" height="9.600" fill="#fafafa"/><rect x="1642.600" y="1056" width="4.600" height="9.600" fill="#fafafa"/>
<path d="M1636 1066.300h12.200v-10.500" fill="none" stroke="#6a6a6a" stroke-width="1"/>
</svg>
<div style="left:1742px;top:1061.5px;width:150px;height:1px;background:#8a8e96"></div>
<div style="left:1742px;top:1062.5px;width:150px;height:1px;background:#f4f5f7"></div>
<svg style="left:1717px;top:1049px" width="26" height="26" viewBox="1717 1049 26 26">
<defs><linearGradient id="zg" x1="0" y1="0" x2="0" y2="1"><stop offset="0" stop-color="#fefefe"/><stop offset="1" stop-color="#dcdfe4"/></linearGradient></defs>
<circle cx="1730.250" cy="1062.200" r="11" fill="url(#zg)" stroke="#9a9ea8" stroke-width="1.200"/>
<rect x="1724.800" y="1060.900" width="11" height="2.800" fill="#6a6a6a"/>
</svg>
<svg style="left:1891px;top:1049px" width="27" height="26" viewBox="1891 1049 27 26">
<circle cx="1904.600" cy="1062.200" r="11" fill="url(#zg)" stroke="#9a9ea8" stroke-width="1.200"/>
<rect x="1899" y="1060.800" width="11.200" height="2.800" fill="#6a6a6a"/><rect x="1903.200" y="1056.600" width="2.800" height="11.200" fill="#6a6a6a"/>
</svg>
<svg style="left:1810px;top:1052px" width="16" height="21" viewBox="1810 1052 16 21">
<path d="M1812 1053.300h11.600v13l-5.800 5-5.800-5z" fill="url(#zg)" stroke="#6a6e78" stroke-width="1.200" stroke-linejoin="round"/>
</svg>
<div style="left:349px;top:173px;width:253.5px;height:309.5px;background:#fff;border:1px solid #b4b8c2;border-radius:3px;box-sizing:border-box;box-shadow:2px 3px 5px rgba(0,0,0,.28)"></div>
<div style="left:351px;top:175px;width:249.5px;height:29px;background:#eff0f4"></div>
<span class="t" style="left:358.60px;top:182px;font-size:15px;font-weight:700;color:#343a46;font-family:'Liberation Sans', sans-serif;letter-spacing:0.605px;line-height:17px;">Data Master</span>
<div style="left:351.5px;top:204px;width:249px;height:61.5px;box-sizing:border-box;border:1px solid #ecc55a;border-radius:3px;background:linear-gradient(180deg,#fef4d0 0%,#fdeaa9 22%,#fbdc80 50%,#fbd872 68%,#fce394 86%,#fdf1c8 100%)"></div>
<span class="t" style="left:414.10px;top:227px;font-size:15.5px;font-weight:700;color:#3c3c3c;font-family:'Liberation Sans', sans-serif;letter-spacing:-0.063px;line-height:17px;">Rencana Aksi</span>
<span class="t" style="left:414.10px;top:289px;font-size:15.5px;font-weight:700;color:#3c3c3c;font-family:'Liberation Sans', sans-serif;letter-spacing:0.157px;line-height:17px;">Tim Pelaksana</span>
<span class="t" style="left:414.10px;top:351px;font-size:15.5px;font-weight:700;color:#3c3c3c;font-family:'Liberation Sans', sans-serif;letter-spacing:-0.045px;line-height:17px;">Ceklis Persiapan</span>
<div style="left:351px;top:390px;width:249.5px;height:29px;background:#eff0f4"></div>
<span class="t" style="left:358.00px;top:397px;font-size:15px;font-weight:700;color:#3c3c3c;font-family:'Liberation Sans', sans-serif;letter-spacing:0.456px;line-height:17px;">0</span>
<span class="t" style="left:414.10px;top:442px;font-size:15.5px;font-weight:700;color:#3c3c3c;font-family:'Liberation Sans', sans-serif;letter-spacing:0.171px;line-height:17px;">Rencana Kunjungan</span>
<svg style="left:360px;top:211px" width="45" height="48" viewBox="360 211 45 48">
<rect x="374.300" y="218.600" width="28.400" height="38.600" rx="3.200" fill="#efefef" stroke="#3a2c10" stroke-width="1.500"/>
<path d="M382.600 221.700a2.200 2.200 0 0 1 0-4.400h2a3.800 3.800 0 0 1 7.400 0h2a2.200 2.200 0 0 1 0 4.400z" fill="#fccd5e" stroke="#3a2c10" stroke-width="1.400" stroke-linejoin="round"/>
<path d="M367.500 227.500l1.600 2.600M363.500 232.200l2.800 1.400M362.200 238.400h2.800M363.500 245l2.800-1.600M379.500 227.800l-1.500 2.600M384.500 232.600l-2.600 1.400M385.800 238.500h-2.800M384.500 244.800l-2.600-1.600" stroke="#3a2c10" stroke-width="1.300" stroke-linecap="round"/>
<path d="M373.900 229.800c4.600 0 8.200 3.500 8.200 8 0 3-1.600 5-3.200 7-.8 1-1.200 1.800-1.400 2.800h-7.200c-.2-1-.6-1.800-1.400-2.800-1.600-2-3.200-4-3.200-7 0-4.500 3.600-8 8.200-8z" fill="#fccd5e" stroke="#3a2c10" stroke-width="1.500"/>
<path d="M372.300 247.200l-.8-5.600c-2.600.4-2.600-2.800-.4-2.800 1.600 0 1.600 1.400 1.400 2.800M375.500 247.200l.8-5.600c2.600.4 2.600-2.800.4-2.800-1.600 0-1.600 1.400-1.400 2.800" fill="none" stroke="#3a2c10" stroke-width="1.100"/>
<path d="M370.600 247.400h6.800v4.800c0 1.400-1.400 2.400-3.400 2.400s-3.400-1-3.400-2.400z" fill="#d8d8d8" stroke="#3a2c10" stroke-width="1.200"/>
<path d="M370.800 249.400h6.400M370.800 251.400h6.400" stroke="#6a6a6a" stroke-width=".9"/>
<path d="M384.400 251.400c8-3.600 12.400-11 13-22.600" fill="none" stroke="#1a1a1a" stroke-width="1.400" stroke-linecap="round"/><path d="M394.600 231l2.900-3.200 2.500 3.600" fill="none" stroke="#1a1a1a" stroke-width="1.400" stroke-linecap="round" stroke-linejoin="round"/>
<circle cx="390.600" cy="233.600" r="2.200" fill="#f08898" stroke="#5a1a28" stroke-width="1.200"/><circle cx="394.700" cy="251.400" r="2.200" fill="#f08898" stroke="#5a1a28" stroke-width="1.200"/>
<path d="M396.700 242.400l3 3M399.700 242.400l-3 3" stroke="#1a1a1a" stroke-width="1.200"/>
</svg>
<svg style="left:357px;top:272px" width="50" height="50" viewBox="357 272 50 50">
<path d="M365.6 276.79999999999995v1.600M365.6 282.0v-1.600M363.0 279.4h1.600M368.20000000000005 279.4h-1.600" stroke="#1a1a1a" stroke-width="1.500" stroke-linecap="round"/><path d="M398.9 276.79999999999995v1.600M398.9 282.0v-1.600M396.29999999999995 279.4h1.600M401.5 279.4h-1.600" stroke="#1a1a1a" stroke-width="1.500" stroke-linecap="round"/>
<path d="M382.500 273.400v.8M382.500 277.400v3M376.600 275.600l2.400 2.200M388.400 275.600l-2.400 2.200" stroke="#1a1a1a" stroke-width="1.600" stroke-linecap="round"/>
<path d="M359 316.600v-6.200c0-4.400 3.400-6.800 7-7.200h7c3.600.4 7 2.800 7 7.200v6.200z" fill="#79d1f9" stroke="#1a1a1a" stroke-width="1.800" stroke-linejoin="round"/>
<path d="M385 316.600v-6.200c0-4.400 3.400-6.800 7-7.200h7c3.600.4 7 2.800 7 7.200v6.200z" fill="#8ad96a" stroke="#1a1a1a" stroke-width="1.800" stroke-linejoin="round"/>
<path d="M362.800 316v-5M402.200 316v-5" stroke="#1a1a1a" stroke-width="1.600"/>
<path d="M366.500 303l3 5 3-5zM392.300 303l3 5 3-5z" fill="#f9ceb2" stroke="#1a1a1a" stroke-width="1.200" stroke-linejoin="round"/>
<circle cx="369.400" cy="294.700" r="5.600" fill="#f9ceb2" stroke="#1a1a1a" stroke-width="1.800"/>
<path d="M363.800 294.300a5.600 5.600 0 0 1 11.200 0c-3.600 1-7.600 1-11.200 0z" fill="#8d8d99" stroke="#1a1a1a" stroke-width="1.500" stroke-linejoin="round"/>
<circle cx="395.300" cy="294.700" r="5.600" fill="#f9ceb2" stroke="#1a1a1a" stroke-width="1.800"/>
<path d="M389.700 294.300a5.600 5.600 0 0 1 11.200 0c-3.600 1-7.600 1-11.200 0z" fill="#8d8d99" stroke="#1a1a1a" stroke-width="1.500" stroke-linejoin="round"/>
<path d="M367.800 320.300v-6.600c0-5 4-7.400 8.400-7.800h12.600c4.400.4 8.400 2.800 8.400 7.800v6.600z" fill="#f95a5a" stroke="#1a1a1a" stroke-width="1.900" stroke-linejoin="round"/>
<path d="M372.800 320v-6M392.200 320v-6" stroke="#1a1a1a" stroke-width="1.700"/>
<path d="M378.500 304.500l4 9.800 4-9.800z" fill="#f9ceb2" stroke="#1a1a1a" stroke-width="1.400" stroke-linejoin="round"/>
<circle cx="382.500" cy="294.300" r="7.300" fill="#f9ceb2" stroke="#1a1a1a" stroke-width="1.900"/>
<path d="M375.200 292.600a7.300 7.300 0 0 1 14.600-.6c-1.600.2-3.400-.6-4.600-1.800-2.400 2.200-6.200 3-10 2.400z" fill="#f1b14a" stroke="#1a1a1a" stroke-width="1.500" stroke-linejoin="round"/>
<circle cx="379.600" cy="295.800" r=".9" fill="#3a2418"/><circle cx="385.400" cy="295.800" r=".9" fill="#3a2418"/>
<path d="M380.400 298.400c.6 1.800 3.600 1.800 4.200 0z" fill="#1a1a1a"/>
</svg>
<svg style="left:358px;top:334px" width="49" height="51" viewBox="358 334 49 51">
<path d="M377.500 338.500a1.700 1.700 0 0 1 1.700-1.700h23.600a1.700 1.700 0 0 1 1.700 1.700v41.800a1.700 1.700 0 0 1-1.700 1.700h-22.300" fill="#c9e9f5" stroke="#2a3438" stroke-width="1.900" stroke-linejoin="round"/>
<path d="M377.500 338.500v36" stroke="#2a3438" stroke-width="1.900"/>
<path d="M381.200 337.600h20.800l-20.800 6.800z" fill="#81898f" stroke="#2a3438" stroke-width="1.300" stroke-linejoin="round"/>
<path d="M402.300 340v40" stroke="#e6f6fb" stroke-width="1.400"/>
<path d="M382.400 349.9h4M379.900 352.7h6.500" stroke="#2a3438" stroke-width="1.400" stroke-linecap="round"/><rect x="389.100" y="348.0" width="6.600" height="6.600" rx="1" fill="#f8f0c0" stroke="#1a1a1a" stroke-width="1.600"/><path d="M391.400 351.0l1.600 1.400 7.400-6.600" fill="none" stroke="#1a1a1a" stroke-width="1.300" stroke-linecap="round"/><path d="M382.400 361.0h4M379.900 363.8h6.500" stroke="#2a3438" stroke-width="1.400" stroke-linecap="round"/><rect x="389.100" y="359.1" width="6.600" height="6.600" rx="1" fill="#e890a0" stroke="#1a1a1a" stroke-width="1.600"/><path d="M391.400 362.1l1.600 1.400 7.400-6.600" fill="none" stroke="#1a1a1a" stroke-width="1.300" stroke-linecap="round"/><path d="M382.400 372.3h4M379.900 375.1h6.500" stroke="#2a3438" stroke-width="1.400" stroke-linecap="round"/><rect x="389.100" y="370.40000000000003" width="6.600" height="6.600" rx="1" fill="#f8f0c0" stroke="#1a1a1a" stroke-width="1.600"/><path d="M391.400 373.40000000000003l1.600 1.400 7.400-6.600" fill="none" stroke="#1a1a1a" stroke-width="1.300" stroke-linecap="round"/>
<path d="M361 382v-6.800c0-3.400 2.600-5 6-5s6 1.600 6 5v2.600h-4.800v-2c0-1.600-2.400-1.600-2.400 0V382z" fill="#81898f" stroke="#1a1a1a" stroke-width="1.600" stroke-linejoin="round"/>
<path d="M365.800 381.800v-3.400h10.600c1.800 0 1.800 3.400 0 3.400z" fill="#f9c9c1" stroke="#1a1a1a" stroke-width="1.300" stroke-linejoin="round"/>
<path d="M363.600 365c-.4-3.400 1.200-5.600 4.600-5.600 3.200 0 4.800 2 4.800 5 0 3.400-1.800 5.200-4.600 5.200-2.400 0-4.400-1.600-4.800-4.600z" fill="#f9c9c1" stroke="#1a1a1a" stroke-width="1.500"/>
<path d="M361 363.500c0-3.800 2.400-5.200 5-5.200h7.800l-1 3.400h-5.200c-1 1-1.800 2.200-2 4l1.200 2.600c-3.200.4-5.800-1.400-5.800-4.800z" fill="#81898f" stroke="#1a1a1a" stroke-width="1.500" stroke-linejoin="round"/>
</svg>
<svg style="left:357px;top:426px" width="51" height="49" viewBox="357 426 51 49">
<path d="M381 431.700v37.200" stroke="#1a1a1a" stroke-width="1.600"/>
<circle cx="381" cy="431.7" r="2.300" fill="#f08890" stroke="#1a1a1a" stroke-width="1.500"/><circle cx="381" cy="443.9" r="2.300" fill="#a098d8" stroke="#1a1a1a" stroke-width="1.500"/><circle cx="381" cy="456.4" r="2.300" fill="#20d8a0" stroke="#1a1a1a" stroke-width="1.500"/><circle cx="381" cy="468.9" r="2.300" fill="#f8d060" stroke="#1a1a1a" stroke-width="1.500"/>
<rect x="387.200" y="428.3" width="18" height="6.400" rx="1" fill="#f8888c" stroke="#1a1a1a" stroke-width="1.600"/><path d="M391 431.5h10.400" stroke="#5a0810" stroke-width="1.400" stroke-linecap="round"/><rect x="387.200" y="440.7" width="18" height="6.400" rx="1" fill="#a098d8" stroke="#1a1a1a" stroke-width="1.600"/><path d="M391 443.9h10.400" stroke="#181060" stroke-width="1.400" stroke-linecap="round"/><rect x="387.200" y="453.2" width="18" height="6.400" rx="1" fill="#22d8a0" stroke="#1a1a1a" stroke-width="1.600"/><path d="M391 456.4h10.400" stroke="#084830" stroke-width="1.400" stroke-linecap="round"/><rect x="387.200" y="465.7" width="18" height="6.400" rx="1" fill="#f8d060" stroke="#1a1a1a" stroke-width="1.600"/><path d="M391 468.9h10.400" stroke="#4a3808" stroke-width="1.400" stroke-linecap="round"/>
<rect x="361.500" y="441.600" width="14.600" height="18.600" rx="1.200" fill="#fdfdfd" stroke="#1a1a1a" stroke-width="1.500"/>
<path d="M361.500 446.400v-3.600a1.200 1.200 0 0 1 1.200-1.200h12.200a1.200 1.200 0 0 1 1.200 1.200v3.600z" fill="#f07a82" stroke="#1a1a1a" stroke-width="1.500"/>
<path d="M364.600 439.400v4M372.900 439.400v4" stroke="#1a1a1a" stroke-width="1.600" stroke-linecap="round"/>
<text x="369.800" y="456.200" font-family="Liberation Sans, sans-serif" font-weight="700" font-size="8.600" text-anchor="middle" fill="#1a1a1a">31</text>
<circle cx="363.300" cy="459" r="4.500" fill="#e1edf5" stroke="#1a1a1a" stroke-width="1.500"/>
<path d="M363.300 456.300v2.900h2.300" fill="none" stroke="#1a1a1a" stroke-width="1.200" stroke-linecap="round"/>
</svg>
<svg style="left:565px;top:232px;" width="24" height="32" viewBox="0 0 24 32"><path d="M2.500 2.200v22.300l5.200-5 4 8.700 3.600-1.700-4-8.400h7.200z" fill="#fff" stroke="#000" stroke-width="1.500" stroke-linejoin="miter"/></svg>
</div></body></html>
